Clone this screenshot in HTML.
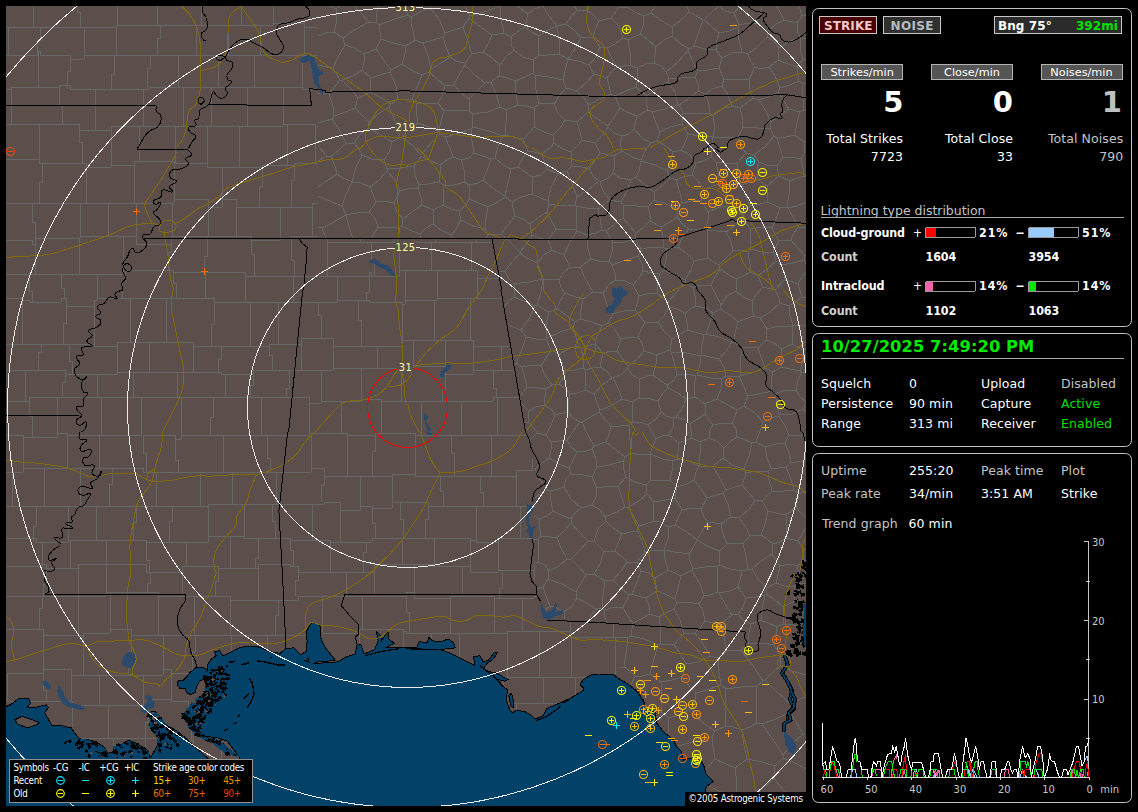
<!DOCTYPE html>
<html lang="en"><head><meta charset="utf-8"><title>Lightning Detector</title>
<style>
html,body{margin:0;padding:0;background:#000;}
body{width:1138px;height:812px;overflow:hidden;position:relative;font-family:"DejaVu Sans Condensed","DejaVu Sans","Liberation Sans",sans-serif;color:#fff;}
.map{position:absolute;left:6px;top:6px;}
.rl text{letter-spacing:.4px;font:11px "DejaVu Sans Condensed","DejaVu Sans","Liberation Sans",sans-serif;fill:#ffff9c;}

.pn{position:absolute;left:0;top:0;}
.pn text{font-family:"DejaVu Sans","Liberation Sans",sans-serif;font-size:12.5px;letter-spacing:.08px;fill:#fff;white-space:pre;}
.pn .b{font-family:"DejaVu Sans Condensed","DejaVu Sans","Liberation Sans",sans-serif;font-weight:bold;font-size:12.4px;letter-spacing:-0.1px;}
.pn .bt{font-weight:bold;font-size:12px;}
.pn .big{font-weight:bold;font-size:29px;}
.pn .dt{font-weight:bold;font-size:16.3px;fill:#00ea00;}
.pn .g{fill:#c4c4c4;}
.pn .gr{fill:#00e000;}
.pn .lb{font-size:11.3px;letter-spacing:0;}
.pn .ax{font-family:"DejaVu Sans Condensed","DejaVu Sans","Liberation Sans",sans-serif;font-size:11px;fill:#c8c8c8;}
.pn .lg{font-family:"DejaVu Sans Condensed","DejaVu Sans","Liberation Sans",sans-serif;font-size:9.7px;letter-spacing:-0.25px;fill:#fff;}
.pn .e{text-anchor:end;}
.pn .m{text-anchor:middle;}

</style></head><body>
<svg class="map" width="800" height="800" viewBox="6 6 800 800" shape-rendering="crispEdges">
<rect x="6" y="6" width="800" height="800" fill="#5c4f4b"/>
<path d="M318,227 322,228M322,228 326,239M774,778 762,789 751,799M774,778 782,789 792,799M751,799 756,806M792,799 789,806M806,794 799,796 792,799M318,161 327,156M318,187 328,180 337,174M337,174 335,166 331,156M327,156 331,156M318,146 327,156M346,143 338,151 331,156M346,143 340,131 332,119M332,119 318,123M318,196 332,202 342,206M337,174 343,178 352,182M342,206 346,194 352,182M346,143 354,143M362,155 359,149 354,143M362,155 356,167 352,182M524,423 528,422M528,442 537,433M528,422 534,428 537,433M551,442 546,435M551,442 551,450 549,458M546,435 537,433M549,458 542,463 535,469M533,539 538,539M534,563 538,562M538,562 539,550 538,539M532,194 532,187 532,177M532,194 539,197 548,201M548,201 551,187 558,174M532,177 541,175 547,169M558,174 547,169M802,16 799,6M802,16 797,23M797,23 784,20M784,20 780,12 776,6M767,32 776,24 784,20M767,32 757,23M757,23 760,15 762,6M739,25 734,13M739,25 749,23 757,23M734,13 740,6M644,16 635,12 627,7M644,16 651,13M655,6 651,13M627,7 619,7M806,628 806,631M806,675 792,671 780,666M780,666 781,657M806,642 792,648 781,657M751,624 761,620M751,624 749,633 748,643M748,643 763,643 774,645M774,645 776,636 777,627M761,620 768,623 777,627M806,628 794,625 783,624M774,645 781,657M783,624 777,627M726,689 725,709 726,726M726,689 721,685M726,726 715,731M715,731 702,722 691,709M691,709 695,702 696,693M721,685 707,690 696,693M780,666 773,672 765,680M748,643 741,650M741,650 753,666 763,681M765,680 763,681M806,697 800,699 792,705M765,680 777,692 792,705M726,689 741,687 757,686M726,726 733,727 742,730M757,686 756,705 757,723M742,730 750,727 757,723M735,768 737,783 736,797M735,768 742,763 747,759M736,797 742,796 751,799M774,778 775,766M747,759 762,762 775,766M757,686 763,681M792,705 790,712M790,712 776,719 762,724M762,724 757,723M741,650 727,651M721,685 719,673 718,658M727,651 718,658M696,693 690,687 682,677M682,677 686,664M686,664 699,662 710,656M718,658 710,656M735,768 726,764 715,759M715,731 712,737M742,730 744,745 747,759M715,759 713,747 712,737M803,734 806,734M803,734 793,743 783,755M783,758 783,755M783,758 795,763 806,769M790,712 796,722 803,734M762,724 774,741 783,755M775,766 783,758M400,137 392,142M400,137 395,121 389,107M392,142 381,135 368,128M389,107 378,114 369,122M369,122 368,128M384,160 389,152 392,142M384,160 372,159 362,155M354,143 360,135 368,128M322,228 332,223 346,215M353,239 349,227 346,215M342,206 346,215M648,425 640,422 633,422M648,425 656,419 661,412M633,422 632,411 632,402M632,402 639,398M639,398 647,398 658,401M661,412 658,401M551,442 559,441 567,440M549,458 558,464 569,468M569,468 573,460 577,452M567,440 571,447 577,452M624,667 630,671 635,676M624,667 620,667M635,676 631,685M461,220 459,211M461,220 473,226 485,229M488,207 486,218 485,229M488,207 479,203 469,199M469,199 466,205 459,211M664,248 663,237 661,227M664,248 653,247 641,249M641,249 635,239M661,227 650,221M650,221 643,228 636,233M635,239 636,233M547,212 552,222 556,229M547,212 539,217 530,224M532,235 530,224M532,235 539,238 548,240M548,240 556,229M532,194 521,197 512,202M548,201 549,204M549,204 547,212M515,216 513,208 512,202M515,216 523,219 530,224M738,27 729,31 719,33M738,27 739,40 742,52M742,52 732,53 722,58M719,33 717,40 716,50M716,50 722,58M666,72 669,78M666,72 678,62 688,50M669,78 682,78 695,77M688,50 692,60 698,71M695,77 698,71M566,88 563,80M566,88 559,96 554,104M539,104 547,103 554,104M539,104 536,90 535,75M535,75 549,77 563,80M577,91 587,82 594,74M577,91 566,88M594,74 589,65M589,65 578,61 568,59M563,80 565,71 568,59M636,87 647,96M636,87 638,78 637,68M666,72 661,66 654,63M669,78 668,82M668,82 657,88 647,96M637,68 646,64 654,63M644,16 643,26 640,34M651,13 662,21 672,27M640,34 647,39 656,47M656,47 664,40 672,36M672,36 672,27M688,50 689,49M654,63 655,55 656,47M672,36 681,44 689,49M716,50 705,49 694,46M719,68 722,58M719,68 708,70 698,71M689,49 694,46M687,6 689,12M689,12 695,15 703,20M719,6 712,12 704,20M672,27 680,21 689,12M694,46 698,34 703,20M734,13 725,11 719,6M738,27 739,25M719,33 711,26 704,20M599,21 592,14 587,10M599,21 595,30 593,37M593,37 581,38M581,38 575,31 566,24M566,24 571,17 577,10M587,10 577,10M588,6 587,10M619,7 611,18M611,18 599,21M589,65 596,57 600,47M600,47 593,37M568,59 575,49 581,38M574,6 577,10M804,260 793,263 781,265M804,260 806,264M806,272 800,280 798,284M781,265 784,271 784,280M798,284 790,281 784,280M806,298 802,297M798,284 802,297M793,325 790,316 789,306M793,325 792,326M792,326 779,326 767,329M780,303 789,306M780,303 770,312 760,318M760,318 767,329M806,325 793,325M802,297 795,303 789,306M775,290 784,280M775,290 779,298 780,303M804,260 805,256M805,256 806,255M802,16 806,15M751,624 743,620 738,614M765,595 762,609 761,620M765,595 756,597 746,598M738,614 743,607 746,598M709,786 721,792 733,798M733,798 729,806M678,746 696,741 712,737M715,759 706,769M736,797 733,798M656,712 662,712M669,735 668,727 669,718M662,712 669,718M635,676 642,676 650,674M661,682 650,674M661,682 661,697 662,712M691,709 680,714 669,718M682,677 672,680 661,682M451,235 441,230 433,224M451,235 451,239M421,239 420,234M433,224 426,228 420,234M387,169 400,168 414,166M387,169 384,160M400,137 402,137M402,137 413,146 421,155M414,166 421,156M391,104 380,97 370,92M391,104 398,99M398,99 396,86 390,72M390,72 380,75 371,78M371,78 370,86 370,92M485,83 477,91 469,99M485,83 475,75 465,65M465,65 459,75 454,85M454,85 461,93 469,99M471,129 460,133 445,137M471,129 472,141 474,153M445,137 450,148 453,157M474,153 469,158 461,160M453,157 461,160M421,155 431,143 440,134M440,134 445,137M440,165 429,160 421,156M440,165 447,160 453,157M376,49 381,39M376,49 383,59 391,70M381,39 393,43 406,46M406,46 405,54 402,64M391,70 402,64M364,54 376,49M364,54 364,63 362,70M362,70 371,78M390,72 391,70M411,17 408,15M411,17 412,27 415,40M415,40 406,46M408,15 395,19 379,25M379,25 381,39M422,75 413,71 402,64M422,75 429,72M429,72 431,69M431,69 428,56 423,43M423,43 415,40M412,99 418,85 422,75M412,99 398,99M333,68 338,57 345,45M333,68 327,67 318,65M318,36 326,33 334,32M345,45 343,38M334,32 343,38M364,54 354,48 345,45M377,23 379,25M377,23 369,22M343,38 356,29 369,22M334,116 333,106 329,94M334,116 343,113 355,108M355,108 358,98M358,98 351,89 342,80M329,94 334,88 340,80M340,80 342,80M332,119 334,116M318,93 329,94M369,122 361,114 355,108M389,107 391,104M370,92 363,96 358,98M362,70 353,76 342,80M333,68 340,80M371,239 378,227M346,215 357,213 369,212M378,227 375,218 369,212M398,239 400,227M378,227 391,228 400,227M420,234 412,231 402,226M400,227 402,226M526,337 536,339 546,339M526,337 522,349 516,363M541,366 533,365 522,367M541,366 546,358 551,350M546,339 551,350M516,363 522,367M535,306 529,319 521,330M535,306 524,301 514,297M514,297 509,301 504,307M521,330 513,327 507,325M514,363 516,363M526,337 521,330M461,220 456,229 451,235M485,229 488,235M486,239 488,235M515,216 508,225 501,234M512,202 505,197M505,197 496,203 488,207M501,234 488,235M532,235 526,245 520,252M501,234 510,242 520,252M600,410 597,403 594,394M600,410 611,406 622,399M594,394 602,385 612,378M622,399 619,390 613,378M633,422 629,425M632,402 622,399M599,412 600,410M599,412 606,421 611,426M611,426 620,426 629,425M600,367 593,368 586,370M600,367 607,371 612,378M586,370 585,380 586,390M586,390 594,394M648,425 652,432 656,439M674,418 666,416 661,412M674,418 673,427 669,435M669,435 662,436 656,439M647,494 646,485M647,494 654,502M654,502 666,500 675,498M675,498 677,487M677,487 670,480M670,480 659,480 651,480M646,485 651,480M670,480 672,471 672,461M672,461 663,459 650,454M651,480 650,468 650,454M629,425 630,440 631,453M656,439 652,448 650,454M631,453 640,455 650,454M597,467 596,459 592,449M597,467 609,465 623,461M623,461 625,457M625,457 616,450 606,442M606,442 594,446M594,446 592,449M592,477 583,475 571,474M592,477 597,467M569,468 571,474M577,452 586,451 592,449M646,485 635,482 626,477M626,477 624,470 623,461M631,453 625,457M611,426 609,434 606,442M599,412 589,418 582,422M582,422 587,433 594,446M567,440 574,430 580,422M580,422 582,422M592,477 597,488M626,477 618,486M597,488 609,486 618,486M535,469 540,480 548,490M535,498 541,493 548,490M538,539 541,536M541,536 540,529 539,519M534,516 539,519M538,562 545,565 549,571M549,571 559,566 567,559M541,536 551,537 557,538M557,538 561,548 567,559M536,589 543,587M543,612 550,606M550,606 546,596 543,587M549,571 548,579M543,587 548,579M803,409 806,402M803,409 806,413M789,435 785,443M789,435 798,435 806,435M806,461 797,462 791,462M791,462 789,453 785,443M789,435 785,426 779,416M803,409 792,414 779,415M774,136 770,128M774,136 765,147 754,155M738,137 743,127M738,137 741,146 746,153M754,155 746,153M743,127 758,128 770,128M740,108 748,102 753,98M740,108 742,116 743,127M771,122 770,128M771,122 766,111 759,100M759,100 753,98M724,79 736,79 749,80M724,79 722,86M740,108 732,106M722,86 728,95 732,106M753,98 750,90 749,80M806,38 800,38M806,60 803,59M803,59 800,50 800,38M797,23 797,30 800,38M799,81 790,85 780,88M799,81 802,83M802,83 803,96 804,110M778,92 780,88M778,92 784,101 789,109M789,109 800,112M800,112 804,110M806,83 802,83M803,59 797,67M797,67 799,81M806,111 804,110M771,122 780,115 789,109M759,100 768,97 778,92M757,179 757,169 759,162M757,179 767,186M759,162 767,165 777,166M767,186 774,180 779,176M777,166 779,176M780,208 787,207M780,208 776,219 772,228M799,227 793,234 791,240M799,227 794,219 788,208M788,208 787,207M772,228 776,236 779,241M791,240 779,241M767,186 767,194 768,202M768,202 780,208M790,181 779,176M790,181 789,194 787,207M805,256 797,247 791,240M806,228 799,227M806,202 797,206 788,208M806,177 804,176M804,176 795,179 790,181M577,91 584,98 589,105M607,78 594,74M607,78 609,85 611,94M611,94 599,99 589,105M495,158 491,159M495,158 503,165 511,169M491,159 488,168 483,180M511,169 508,183 505,196M505,196 494,189 483,180M465,182 469,185M465,182 464,170 461,160M469,185 478,183 483,180M474,153 483,156 491,159M518,167 525,172 532,177M518,167 511,169M469,199 470,191 469,185M613,242 606,231M613,242 625,242 635,239M636,233 629,225 623,218M606,231 614,225 623,218M534,108 539,104M534,108 527,106 518,105M533,73 535,75M533,73 525,77 515,81M518,105 516,94 515,81M503,136 489,131 473,127M503,136 505,135M505,135 506,122 506,110M473,127 472,114M472,114 488,112 500,107M506,110 500,107M471,129 473,127M495,158 498,146 503,136M485,83 491,82M469,99 469,110M469,110 472,114M491,82 496,94 500,107M518,105 506,110M515,81 508,78 499,76M499,76 491,82M500,6 484,12 470,16M470,16 465,6M504,33 492,35M504,33 501,19 500,6M470,16 469,18M492,35 482,28 469,18M554,143 553,135M554,143 550,148 542,154M553,135 544,132 534,127M542,154 534,152 528,151M534,127 530,132 523,139M528,151 523,139M534,108 535,116 534,127M554,104 558,113 565,120M565,120 560,128 553,135M518,167 522,159 528,151M547,169 544,160 542,154M505,135 513,137 523,139M517,6 528,14M528,14 534,9 543,6M566,24 557,26M543,6 549,16 557,26M623,38 628,40M623,38 615,44 607,48M628,40 630,53 630,65M607,48 612,59 617,67M617,67 630,65M611,18 619,26 623,38M640,34 628,40M600,47 607,48M637,68 630,65M607,78 612,71 617,67M636,87 626,91 615,96M611,94 615,96M806,348 803,350M792,326 792,334 792,344M792,344 803,350M806,607 795,601M783,624 784,617 783,607M795,601 783,607M783,607 774,599 766,594M564,612 557,608 550,606M564,612 572,606 577,598M548,579 562,584 576,592M577,598 576,592M571,559 567,559M571,559 578,566 586,575M576,592 581,583 586,575M443,205 443,196 444,185M443,205 433,210M433,210 422,205M422,205 421,198 418,188M418,188 419,185M419,185 428,184 439,182M444,185 439,182M459,211 451,209 443,205M465,182 454,185 444,185M433,224 433,210M403,219 402,226M403,219 413,211 422,205M440,165 440,173 439,182M414,166 415,175 419,185M439,132 429,127 418,123M439,132 441,121 444,111M438,103 444,111M438,103 428,104 416,103M416,103 416,113 418,123M402,137 410,129 418,123M440,134 439,132M469,110 455,110 444,111M454,85 445,86M445,86 442,96 438,103M412,99 416,103M429,72 436,78 445,86M376,202 385,201 394,203M376,202 373,194 370,187M387,171 395,180 400,191M387,171 379,180 370,187M400,191 394,203M403,219 397,212 394,203M369,212 376,202M352,182 361,183 370,187M387,169 387,171M418,188 410,188 400,191M713,425 705,414M713,425 724,423 732,423M717,399 705,404M717,399 728,405 737,410M737,410 735,417 732,423M705,414 705,404M668,388 678,393 686,399M668,388 667,385M667,385 674,380 677,374M677,374 687,374 696,376M696,376 694,386 695,397M686,399 695,397M674,418 676,417M658,401 663,393 668,388M676,417 682,409 686,399M676,417 685,420 690,424M690,424 696,420 705,414M705,404 695,397M639,398 639,387 640,379M613,378 622,374 628,368M628,368 632,375 640,379M667,385 661,381 653,375M640,379 647,376 653,375M677,374 674,362 671,352M657,355 656,364 653,375M657,355 670,350M671,352 670,350M775,290 763,287M760,318 754,316M754,316 752,309 752,301M763,287 756,295 752,301M566,371 575,370 583,368M566,371 562,363 559,354M583,368 583,357 581,348M559,354 570,348 579,346M581,348 579,346M600,367 601,362 603,353M586,370 583,368M603,353 595,344M595,344 581,348M541,366 545,375 552,385M551,350 559,354M566,371 563,378 559,384M552,385 559,384M586,390 577,393 570,394M559,384 565,388 570,394M580,422 573,418 568,412M570,394 568,405 568,412M546,435 552,423 555,415M555,415 568,412M498,271 505,271M520,252 520,253M520,253 513,261 505,271M514,297 514,284M514,284 509,279 505,271M647,494 639,501 628,507M618,486 621,495 625,507M628,507 625,507M557,538 565,530 571,523M571,559 581,549 588,541M571,523 579,532 588,541M597,488 596,497 592,505M625,507 617,512 605,517M592,505 600,510 605,517M604,551 615,551M604,551 594,541M615,551 618,543 622,534M622,534 613,528 606,521M606,521 598,529 594,541M604,551 600,564 594,574M586,575 594,574M594,541 588,541M713,425 710,430 709,438M732,423 736,429 737,437M709,438 718,442 724,448M737,437 731,441 724,448M699,466 689,461 677,459M699,466 700,455 700,442M677,459 678,452 679,443M679,443 692,438M692,438 700,442M694,480 696,472 699,466M694,480 687,484 677,487M672,461 677,459M707,498 716,495 723,493M707,498 701,489 694,480M713,466 699,466M713,466 720,479 726,490M726,490 723,493M713,466 723,458M709,438 700,442M724,448 723,458M669,435 679,443M690,424 692,438M769,67 761,69 755,67M769,67 778,60M778,60 779,48M748,54 751,62 755,67M748,54 757,47 767,37M767,37 774,41 779,48M749,80 755,67M780,88 775,76 769,67M797,67 788,64 778,60M800,38 790,41 779,48M742,52 748,54M724,79 719,68M767,32 767,37M757,179 749,182 742,185M768,202 760,204 750,206M742,185 745,194 750,206M736,279 736,291M736,279 743,276 750,272M736,291 743,297 752,301M763,287 758,276M750,272 758,276M781,265 776,261M758,276 767,269 776,261M779,241 773,252M776,261 773,252M565,120 577,122M589,105 588,112M577,122 584,116 588,112M738,137 726,138 713,137M732,106 722,109 713,116M713,137 715,128 713,116M554,143 563,149 571,152M577,122 580,132 582,140M571,152 578,145 582,140M558,174 567,171M567,171 572,166M571,152 572,166M661,227 670,222 677,217M650,221 650,215 648,207M677,209 677,217M677,209 664,203 654,200M654,200 648,207M623,218 623,205M648,207 637,206 623,205M711,157 703,161 696,163M711,157 712,146 713,137M696,163 690,155 681,150M713,137 699,136 688,134M681,150 685,143 688,134M668,82 675,92 678,105M678,105 665,109 652,112M647,96 646,102 648,110M652,112 648,110M681,150 673,152M673,152 666,146 657,141M682,124 688,134M682,124 670,127 660,132M660,132 657,141M591,259 580,267M591,259 599,261 609,261M580,267 586,280 593,292M612,265 609,261M612,265 615,273 615,280M615,280 608,286 603,293M603,293 593,292M613,242 612,252 609,261M587,235 588,249 591,259M587,235 596,233 602,230M602,230 606,231M638,256 641,249M638,256 626,260 612,265M570,267 564,255M570,267 563,273 559,280M559,280 550,279 543,280M552,250 564,255M552,250 544,255 537,263M537,263 541,272 542,279M543,280 542,279M577,231 570,242 564,255M577,231 587,235M580,267 570,267M576,229 567,230 556,229M576,229 577,231M548,240 552,250M520,253 527,258 537,263M514,284 529,282 542,279M535,306 537,305M537,305 541,292 543,280M579,346 576,337 573,328M547,338 560,332 573,328M537,305 549,312M547,338 546,324 549,312M598,209 605,204 610,200M598,209 587,208 576,206M577,197 588,190 599,181M577,197 575,205M610,200 603,191 600,182M576,206 575,205M602,230 600,218 598,209M623,205 621,202M621,202 610,200M576,229 577,217 576,206M567,171 572,183 577,197M572,166 582,167 589,169M589,169 593,176 599,181M549,204 561,206 575,205M621,202 627,191 631,180M613,173 620,178 631,180M613,173 608,178 600,182M450,57 456,61 465,63M450,57 446,47 443,37M463,27 468,41 472,54M463,27 454,30 445,33M465,63 472,54M445,33 443,37M465,65 465,63M431,69 441,63 450,57M423,43 433,40 443,37M492,35 488,44 483,52M483,52 472,54M469,18 463,27M430,8 431,6M430,8 439,19 445,33M500,65 492,58 483,52M500,65 499,76M430,8 422,11 411,17M568,59 559,54M559,54 559,39 557,26M804,142 805,152M804,142 795,135M783,158 791,157 801,159M783,158 780,148 777,138M801,159 805,152M777,138 786,137 795,135M806,141 804,142M800,112 797,122 795,135M804,176 803,168 801,159M777,166 783,158M774,136 777,138M759,162 754,155M779,416 771,418 763,422M779,415 777,404 775,394M763,422 755,413 744,406M748,396 744,406M748,396 759,394 772,391M772,391 775,394M806,402 800,397 796,390M775,394 785,390 796,390M806,373 802,372M796,390 798,380 802,372M803,350 803,361 800,371M802,372 800,371M782,349 781,358 781,367M782,349 774,343 766,340M766,340 758,348M758,348 761,357 765,368M765,368 773,372M773,372 781,367M792,344 782,349M800,371 790,369 781,367M767,329 766,340M754,316 745,319 738,322M738,322 735,333 734,342M742,348 734,342M742,348 750,347 758,348M740,376 740,362 742,348M740,376 754,372 765,368M748,396 743,385 739,376M772,391 771,380 773,372M791,462 786,467M786,467 791,479 794,490M806,491 799,494M794,490 799,494M786,538 798,541M786,538 787,526 786,515M786,515 796,507M796,507 800,512 806,518M798,541 802,534 806,527M796,507 799,494M615,551 622,557 627,562M605,581 594,574M605,581 613,580M613,580 621,571 627,562M608,624 605,618 604,610M588,623 591,615 596,609M596,609 602,608M602,608 604,610M624,667 626,654 628,638M628,638 620,637M564,612 565,621M577,598 586,603 596,609M605,581 603,595 602,608M686,664 680,653 674,645M710,656 703,644 695,633M674,645 678,640 684,634M695,633 684,634M654,502 653,512 653,521M628,507 634,517 639,526M653,521 646,524 639,526M622,534 631,532 637,531M606,521 605,517M639,526 637,531M697,540 701,533 708,522M697,540 687,532 675,525M708,522 704,517 701,509M701,509 691,508 682,510M682,510 679,516 675,525M720,551 727,544M720,551 709,547 697,540M727,544 723,534 721,524M721,524 708,522M707,498 701,509M723,493 728,504 731,517M721,524 731,517M675,498 682,510M668,527 661,522 653,521M668,527 675,525M408,15 404,6M377,23 376,13 379,6M329,6 336,9M336,9 340,6M334,32 337,20 336,9M369,22 361,13 354,6M719,359 724,367 726,376M719,359 710,357 701,355M697,375 711,378 722,379M697,375 700,364 700,356M722,379 726,376M739,376 726,376M732,342 727,350 719,359M732,342 734,342M706,334 704,335M706,334 719,337 732,342M704,335 702,345 701,355M717,399 721,389 722,379M671,352 687,353 700,356M737,410 744,406M638,337 629,337 621,339M638,337 642,343 644,351M644,351 637,359 628,366M628,366 622,358 617,351M617,351 621,339M645,323 641,329 638,337M645,323 639,315 635,310M635,310 624,311 613,314M613,314 608,323M608,323 615,330 621,339M657,355 644,351M628,368 628,366M603,353 612,351 617,351M595,344 597,336 602,326M602,326 608,323M638,256 642,264 643,271M615,280 625,281 633,285M643,271 639,278 633,285M635,310 637,304 639,296M613,314 607,305 603,293M633,285 639,296M643,271 652,273 660,273M639,296 647,294 657,293M660,273 657,282 657,293M695,306 695,296 693,288M695,306 706,308 713,313M713,313 720,309M711,285 700,285 693,288M711,285 716,295 721,305M720,309 721,305M706,334 710,322 713,313M738,322 730,315 720,309M736,279 729,275 720,269M736,291 727,296 721,305M720,269 716,275 711,285M672,339 680,334 687,330M672,339 664,331 658,322M687,330 687,323 685,313M658,322 664,316 669,307M669,307 677,309 685,313M670,350 672,339M704,335 695,332 687,330M645,323 658,322M695,306 685,313M668,302 657,293M668,302 669,307M668,302 676,293 685,282M685,282 693,288M544,405 545,397 546,389M544,405 536,407 529,411M546,389 537,388 527,387M527,387 520,396M521,403 529,411M552,385 546,389M555,415 551,409 544,405M528,422 529,411M522,367 525,378 527,387M581,508 575,513 571,519M581,508 571,499 564,487M571,519 561,515 553,511M553,511 551,502 550,491M564,487 558,489 550,491M571,523 571,519M592,505 581,508M571,474 566,479 564,487M539,519 547,516 553,511M548,490 550,491M756,442 752,443M756,442 765,447M752,443 749,456 744,469M765,447 767,458 771,468M768,471 771,468M768,471 757,471 746,473M746,473 744,469M763,422 760,431 756,442M737,437 743,439 752,443M785,443 776,444 765,447M723,458 732,465 744,469M786,467 778,468 771,468M772,491 784,491 794,490M772,491 769,480 768,471M726,490 735,487 742,485M742,485 746,473M726,187 738,182M726,187 718,184M718,184 718,172 716,162M738,182 737,173 737,163M737,163 725,163 716,162M742,185 738,182M750,206 743,215M743,215 735,211 727,206M727,206 726,196 726,187M746,153 737,163M711,157 716,162M676,180 683,177 692,175M676,180 680,193 682,203M692,175 698,181 704,189M682,203 691,201 701,200M701,200 704,189M696,163 692,175M718,184 711,187 704,189M689,229 697,230 706,228M689,229 683,225 677,217M677,209 682,203M708,212 708,220 706,228M708,212 701,200M727,206 717,208 708,212M679,105 688,99 698,91M679,105 683,113M683,113 696,113 709,113M709,113 709,105 706,94M698,91 706,94M695,77 698,84 698,91M682,124 683,113M652,112 656,123 660,132M713,116 709,113M722,86 712,89 706,94M615,96 620,108M588,112 598,119 608,126M620,108 615,116 608,126M648,110 637,116M620,108 627,112 637,116M641,161 639,171 636,177M641,161 655,165 667,171M636,177 644,184 654,192M654,192 663,185 670,178M670,178 667,171M654,200 654,192M631,180 636,177M676,180 670,178M673,152 670,163 667,171M565,293 560,301 557,309M565,293 573,296 583,299M557,309 566,315 575,322M583,299 581,310 580,319M580,319 575,322M559,280 561,288 565,293M549,312 557,309M593,292 583,299M573,328 575,322M602,326 592,322 580,319M539,36 538,46 538,56M539,36 530,31 525,27M514,50 511,45 511,37M514,50 523,57 533,60M533,60 538,56M511,37 517,32 525,27M559,54 547,55 538,56M557,26 548,30 539,36M528,14 525,27M500,65 506,57 514,50M504,33 511,37M533,73 533,60M772,491 766,497 762,501M786,515 776,513 768,511M768,511 762,501M742,485 748,492 755,500M731,517 739,518M739,518 749,509 755,500M755,500 762,501M795,587 784,586 776,583M795,587 798,583M798,583 797,574 798,566M798,566 790,564 780,566M776,583 778,575 780,566M795,601 794,593 795,587M766,594 767,588M767,588 776,583M806,584 798,583M806,561 803,559M806,549 804,549M803,559 804,549M798,566 803,559M798,541 804,549M613,580 621,588 629,595M604,610 615,607 623,607M623,607 629,595M704,596 710,595 718,592M704,596 699,604M699,604 703,611 705,621M719,593 725,604 732,615M705,621 713,623 721,624M721,624 732,615M738,614 732,615M746,598 742,593 738,587M738,587 730,591 719,593M738,587 740,580 742,571M719,565 730,569 742,571M719,565 718,566M718,566 717,578 718,592M727,651 724,637 721,624M695,633 700,628 705,621M668,527 668,539 664,550M697,540 693,548 689,554M664,550 675,552 689,554M719,565 720,551M718,566 705,567 693,569M689,554 690,561 693,569M704,596 700,584 692,570M693,569 692,570M627,562 637,562M637,531 642,541 645,552M637,562 645,552M645,552 655,550 664,550M681,576 692,570M681,576 675,573 668,570M668,570 665,559 664,550M664,270 675,275 685,280M664,270 666,259 666,249M666,249 678,247M678,247 686,253 694,261M694,261 691,270 685,280M660,273 664,270M685,282 685,280M664,248 666,249M689,229 682,238 678,247M707,258 694,261M707,258 707,243 708,230M708,230 706,228M707,258 719,265M719,265 720,269M751,229 750,239 751,249M751,229 743,220M743,220 733,227 726,232M726,232 731,241 733,251M733,251 742,250 748,252M748,252 751,249M772,228 762,227 751,229M773,252 762,252 751,249M743,215 743,220M708,230 716,231 726,232M719,265 726,258 733,251M750,272 750,264 748,252M582,140 595,143M608,127 603,135 595,143M589,169 594,162 600,153M600,153 595,143M613,173 615,165 614,156M600,153 614,156M743,543 750,536M743,543 746,557 748,569M750,536 761,535M761,535 767,539 773,544M772,554 773,544M772,554 761,561 752,569M752,569 748,569M727,544 736,543 743,543M739,518 746,527 750,536M742,571 748,569M768,511 765,524 761,535M786,538 780,542 773,544M780,566 776,560 772,554M767,588 758,579 752,569M650,674 654,659 658,645M674,645 660,644M658,645 660,644M628,638 631,636M658,645 644,639 631,636M623,607 627,615 633,623M631,636 633,623M684,634 680,620 674,609M699,604 687,602 677,603M674,609 677,603M660,644 661,631 659,617M674,609 665,613 659,617M633,623 643,618 650,614M659,617 650,614M681,576 678,588 675,599M675,599 677,603M655,578 649,573 641,571M655,578 657,591M641,571 637,582 632,594M657,591 646,598M632,594 638,596 646,598M637,562 641,571M668,570 663,573 655,578M675,599 665,594 657,591M629,595 632,594M650,614 649,606 646,598M622,151 620,143 622,136M622,151 632,157 641,160M651,143 642,138 634,129M651,143 645,151 641,160M634,129 629,134 622,136M608,127 614,133 622,136M614,156 622,151M657,141 651,143M637,116 634,129M33,6 33,27M77,6 77,12 80,12 80,27M117,6 117,25M157,6 157,25M201,6 201,25M241,6 241,25M273,6 273,23M6,27 8,27M8,27 33,27M33,27 40,27M40,27 77,27M77,27 84,27M84,27 116,27M116,27 116,25M117,25 157,25M157,25 160,25M160,25 196,25M196,25 201,25M201,25 228,25M228,25 241,25M241,25 260,25M260,25 273,25M273,25 273,23M273,23 304,23M304,23 304,27M304,27 318,27M8,27 8,55M40,27 40,40 37,40 37,55M84,27 84,55M116,25 116,55M160,25 160,38 157,38 157,55M196,25 196,55M228,25 228,55M260,25 260,55M304,27 304,55M6,55 8,55M8,55 38,55M38,55 38,51M38,51 40,51M40,51 40,55M40,55 70,55M70,55 70,59M70,59 84,59M84,59 84,55M84,55 114,55M114,55 116,55M116,55 150,55M150,55 160,55M160,55 178,55M178,55 196,55M196,55 218,55M218,55 228,55M228,55 254,55M254,55 260,55M260,55 302,55M302,55 304,55M304,55 318,55M38,51 38,87M70,59 70,71 67,71 67,89M114,55 114,74 111,74 111,89M150,55 150,68 147,68 147,87M178,55 178,87M218,55 218,87M254,55 254,87M302,55 302,89M6,89 11,89M11,89 11,87M11,87 38,87M38,87 59,87M59,87 59,85M59,85 70,85M70,85 70,89M70,89 95,89M95,89 114,89M114,89 143,89M143,89 150,89M150,89 150,87M150,87 178,87M178,87 183,87M183,87 211,87M211,87 218,87M218,87 247,87M247,87 254,87M254,87 283,87M283,87 302,87M302,87 302,89M302,89 318,89M11,87 11,124M59,85 59,105 62,105 62,124M95,89 95,130M143,89 143,126M183,87 183,126M211,87 211,126M247,87 247,126M283,87 283,124M6,124 11,124M11,124 39,124M39,124 59,124M59,124 79,124M79,124 79,130M79,130 95,130M95,130 111,130M111,130 111,126M111,126 139,126M139,126 143,126M143,126 175,126M175,126 183,126M183,126 207,126M207,126 211,126M211,126 239,126M239,126 247,126M247,126 283,126M283,126 283,124M283,124 287,124M287,124 315,124M315,124 315,126M315,126 318,126M39,124 39,163M79,130 79,142 82,142 82,163M111,126 111,165M139,126 139,161M175,126 175,163M207,126 207,167M239,126 239,167M287,124 287,165M315,126 315,163M6,159 39,159M39,159 39,163M39,163 42,163M42,163 79,163M79,163 86,163M86,163 86,167M86,167 111,167M111,167 111,165M111,165 134,165M134,165 134,161M134,161 139,161M139,161 174,161M175,161 175,163M175,163 207,163M207,163 207,167M207,167 222,167M222,167 239,167M239,167 262,167M262,167 262,165M262,165 287,165M287,165 294,165M294,165 294,163M294,163 315,163M315,163 318,163M42,163 42,182 39,182 39,203M86,167 86,203M134,161 134,203M174,161 174,199M222,167 222,199M262,165 262,186 259,186 259,207M294,163 294,180 291,180 291,207M6,203 32,203M32,203 42,203M42,203 80,203M80,203 86,203M86,203 108,203M108,203 134,203M134,203 136,203M136,203 172,203M172,203 174,203M174,203 174,199M174,199 208,199M208,199 208,207M208,207 222,207M222,207 222,199M222,199 236,199M236,199 236,207M236,207 262,207M262,207 280,207M280,207 294,207M294,207 312,207M312,207 312,203M312,203 318,203M32,203 32,222 35,222 35,244M80,203 80,236M108,203 108,236M136,203 136,244M172,203 172,236M208,207 208,236M236,207 236,236M280,207 280,238M312,203 312,236M360,239 360,242M393,239 393,242M435,239 435,242M476,239 476,242M6,240 32,240M32,240 32,244M32,244 35,244M35,244 35,238M35,238 79,238M80,238 80,236M80,236 108,236M108,236 123,236M123,236 136,236M136,236 136,244M136,244 171,244M171,244 171,236M172,236 207,236M208,236 236,236M236,236 251,236M251,236 251,240M251,240 280,240M280,240 280,238M280,238 291,238M291,238 291,236M291,236 312,236M312,236 318,236M327,239 327,242M327,242 360,242M360,242 371,242M371,242 396,242M396,242 399,242M399,242 431,242M432,242 471,242M471,242 476,242M476,242 493,242M35,238 35,274M79,238 79,274M123,236 123,270M171,236 171,252 168,252 168,270M207,236 207,256 204,256 204,272M251,240 251,254 254,254 254,276M291,236 291,260 294,260 294,276M327,242 327,276M371,242 371,262 374,262 374,276M399,242 399,270M431,242 431,270M471,242 471,270M6,274 29,274M29,274 35,274M35,274 61,274M61,274 79,274M79,274 97,274M97,274 123,274M123,274 123,270M123,270 125,270M125,270 171,270M171,270 173,270M173,270 173,272M173,272 205,272M205,272 207,272M207,272 245,272M245,272 245,276M245,276 251,276M251,276 291,276M291,276 293,276M293,276 327,276M327,276 337,276M337,276 369,276M369,276 369,272M369,272 371,272M371,272 371,276M371,276 399,276M399,276 399,270M399,270 405,270M405,270 431,270M431,270 437,270M437,270 471,270M471,270 477,270M477,270 477,278M477,278 499,278M29,274 29,291 32,291 32,302M61,274 61,288 64,288 64,298M97,274 97,298M125,270 125,280 122,280 122,298M173,272 173,283 176,283 176,298M205,272 205,298M245,276 245,302M293,276 293,302M337,276 337,300M369,272 369,292 366,292 366,302M405,270 405,300M437,270 437,298M477,278 477,298M6,298 22,298M22,298 22,300M22,300 29,300M29,300 29,302M29,302 61,302M61,302 61,298M61,298 66,298M66,298 66,306M66,306 94,306M94,306 94,300M94,300 97,300M97,300 97,298M97,298 125,298M125,298 130,298M130,298 166,298M166,298 173,298M173,298 205,298M205,298 214,298M214,298 214,302M214,302 245,302M245,302 250,302M250,302 278,302M278,302 293,302M293,302 318,302M318,302 337,302M337,302 337,300M337,300 358,300M358,300 369,300M369,300 369,302M369,302 402,302M402,302 402,304M402,304 405,304M405,304 405,300M405,300 434,300M434,300 437,300M437,300 437,298M437,298 470,298M470,298 477,298M477,298 502,298M22,300 22,344M66,306 66,323 63,323 63,344M94,300 94,346M130,298 130,342M166,298 166,342M214,302 214,324 211,324 211,346M250,302 250,346M278,302 278,344M318,302 318,315 321,315 321,338M358,300 358,320 361,320 361,346M402,304 402,340M434,300 434,340M470,298 470,340M6,344 22,344M22,344 41,344M41,344 66,344M66,344 69,344M69,344 94,344M94,344 94,346M94,346 117,346M117,346 117,342M117,342 130,342M130,342 149,342M149,342 166,342M166,342 193,342M193,342 193,346M193,346 214,346M214,346 221,346M221,346 250,346M250,346 269,346M269,346 269,344M269,344 278,344M278,344 301,344M301,344 301,338M301,338 318,338M318,338 333,338M333,338 333,346M333,346 358,346M358,346 377,346M377,346 402,346M402,346 402,340M402,340 413,340M413,340 434,340M434,340 445,340M445,340 470,340M470,340 473,340M473,340 473,346M473,346 501,346M501,346 510,346M41,344 41,352 38,352 38,370M69,344 69,361 72,361 72,374M117,342 117,372M149,342 149,372M193,346 193,372M221,346 221,359 218,359 218,374M269,344 269,355 272,355 272,370M301,338 301,370M333,346 333,368M377,346 377,368M413,340 413,366M445,340 445,374M473,346 473,370M501,346 501,370M6,370 25,370M25,370 41,370M41,370 65,370M65,370 65,374M65,374 69,374M69,374 97,374M97,374 117,374M117,374 117,372M117,372 133,372M133,372 149,372M149,372 177,372M177,372 193,372M193,372 221,372M221,372 221,374M221,374 225,374M225,374 253,374M253,374 253,370M253,370 269,370M269,370 289,370M289,370 301,370M301,370 321,370M321,370 333,370M333,370 333,368M333,368 361,368M361,368 377,368M377,368 401,368M401,368 401,366M401,366 413,366M413,366 445,366M445,366 445,374M445,374 473,374M473,374 473,370M473,370 493,370M493,370 501,370M501,370 515,370M25,370 25,401M65,374 65,382 62,382 62,397M97,374 97,397M133,372 133,397M177,372 177,397M225,374 225,397M253,370 253,385 250,385 250,397M289,370 289,388 286,388 286,397M321,370 321,401M361,368 361,399M401,366 401,401M445,374 445,389 442,389 442,401M493,370 493,388 496,388 496,397M6,401 25,401M25,401 29,401M29,401 29,397M29,397 57,397M57,397 65,397M65,397 97,397M97,397 101,397M101,397 133,397M133,397 141,397M141,397 177,397M177,397 181,397M181,397 213,397M213,397 225,397M225,397 253,397M253,397 261,397M261,397 289,397M289,397 309,397M309,397 309,403M309,403 321,403M321,403 321,401M321,401 341,401M341,401 361,401M361,401 361,399M361,399 381,399M381,399 381,401M381,401 401,401M401,401 421,401M421,401 445,401M445,401 461,401M461,401 493,401M493,401 493,397M493,397 497,397M497,397 520,397M29,397 29,416 32,416 32,437M57,397 57,433M101,397 101,435M141,397 141,435M181,397 181,435M213,397 213,417 210,417 210,435M261,397 261,435M309,403 309,433M341,401 341,433M381,401 381,433M421,401 421,435M461,401 461,435M497,397 497,435M525,427 525,435M6,435 23,435M23,435 23,437M23,437 29,437M29,437 57,437M57,437 57,433M57,433 67,433M67,433 67,435M67,435 99,435M99,435 101,435M101,435 141,435M143,435 175,435M175,435 175,439M175,439 181,439M181,439 181,435M181,435 213,435M213,435 223,435M223,435 261,435M261,435 267,435M267,435 309,435M309,435 309,433M311,433 341,433M341,433 347,433M347,433 347,435M347,435 375,435M375,435 375,433M375,433 381,433M381,433 415,433M415,433 415,435M415,435 421,435M421,435 451,435M451,435 461,435M461,435 491,435M491,435 497,435M497,435 525,435M525,435 527,435M23,437 23,468M67,435 67,468M99,435 99,468M143,435 143,453 146,453 146,472M175,439 175,460 178,460 178,472M223,435 223,472M267,435 267,458 270,458 270,472M311,433 311,468M347,435 347,476M375,433 375,451 372,451 372,476M415,435 415,476M451,435 451,453 454,453 454,476M491,435 491,476M532,459 532,470M6,472 12,472M12,472 23,472M23,472 23,468M23,468 44,468M44,468 67,468M67,468 80,468M80,468 99,468M99,468 112,468M112,468 143,468M143,468 143,472M143,472 156,472M156,472 175,472M175,472 200,472M200,472 223,472M223,472 232,472M232,472 267,472M267,472 276,472M276,472 311,472M311,472 311,468M311,468 324,468M324,468 324,476M324,476 347,476M347,476 360,476M360,476 375,476M375,476 392,476M392,476 392,474M392,474 415,474M415,474 415,476M415,476 440,476M440,476 451,476M451,476 480,476M480,476 491,476M491,476 516,476M516,476 516,470M516,470 534,470M12,472 12,506M44,468 44,506M80,468 80,506M112,468 112,484 109,484 109,506M156,472 156,506M200,472 200,506M232,472 232,504M276,472 276,504M324,476 324,485 321,485 321,502M360,476 360,506M392,474 392,502M440,476 440,491 443,491 443,506M480,476 480,492 483,492 483,506M516,470 516,506M6,506 12,506M12,506 36,506M36,506 44,506M44,506 68,506M68,506 80,506M80,506 96,506M96,506 112,506M112,506 136,506M136,506 156,506M156,506 172,506M172,506 200,506M200,506 208,506M208,506 208,504M208,504 232,504M232,504 244,504M244,504 272,504M272,504 276,504M276,504 312,504M312,504 324,504M324,504 324,502M324,502 340,502M340,502 340,510M340,510 360,510M360,510 360,506M360,506 372,506M372,506 372,508M372,508 392,508M392,508 392,502M392,502 400,502M400,502 428,502M428,502 428,506M428,506 440,506M440,506 476,506M476,506 480,506M480,506 516,506M516,506 520,506M520,506 535,506M36,506 36,526 33,526 33,542M68,506 68,540M96,506 96,540M136,506 136,522 133,522 133,540M172,506 172,521 169,521 169,542M208,504 208,536M244,504 244,538M272,504 272,521 275,521 275,538M312,504 312,540M340,510 340,542M372,508 372,523 375,523 375,538M400,502 400,519 403,519 403,538M428,506 428,519 425,519 425,538M476,506 476,542M520,506 520,538M6,538 36,538M36,538 36,542M36,542 42,542M42,542 68,542M68,542 68,540M68,540 70,540M70,540 96,540M96,540 106,540M106,540 136,540M136,540 146,540M146,540 146,542M146,542 172,542M172,542 186,542M186,542 208,542M208,542 208,536M208,536 230,536M230,536 244,536M244,536 244,538M244,538 258,538M258,538 272,538M272,538 290,538M290,538 290,540M290,540 312,540M312,540 330,540M330,540 330,542M330,542 340,542M340,542 366,542M366,542 372,542M372,542 372,538M372,538 400,538M400,538 402,538M402,538 428,538M428,538 434,538M434,538 470,538M470,538 470,540M470,540 476,540M476,540 476,542M476,542 498,542M498,542 498,538M498,538 520,538M520,538 533,538M42,542 42,564M70,540 70,568M106,540 106,564M146,542 146,560 149,560 149,572M186,542 186,566M230,536 230,568M258,538 258,558 255,558 255,568M290,540 290,550 293,550 293,566M330,542 330,572M366,542 366,552 363,552 363,572M402,538 402,564M434,538 434,566M470,540 470,572M498,538 498,570M534,565 534,570M6,566 42,566M42,566 42,564M42,564 46,564M46,564 46,568M46,568 70,568M70,568 78,568M78,568 78,564M78,564 106,564M106,564 146,564M146,564 146,572M146,572 150,572M150,572 182,572M182,572 182,566M182,566 186,566M186,566 218,566M218,566 218,568M218,568 230,568M230,568 258,568M258,568 258,564M258,564 290,564M290,564 290,566M290,566 298,566M298,566 298,572M298,572 330,572M330,572 346,572M346,572 366,572M366,572 374,572M374,572 374,564M374,564 402,564M402,564 414,564M414,564 434,564M434,564 434,566M434,566 462,566M462,566 470,566M470,566 470,572M470,572 498,572M498,572 498,570M498,570 502,570M502,570 534,570M46,568 46,584 43,584 43,596M78,564 78,596M106,564 106,592M150,572 150,583 147,583 147,592M182,566 182,596M218,568 218,581 215,581 215,596M258,564 258,600M298,572 298,580 295,580 295,596M346,572 346,596M374,564 374,596M414,564 414,598M462,566 462,596M502,570 502,588 499,588 499,598M534,570 534,579 535,579M6,596 42,596M42,596 46,596M46,596 78,596M78,596 106,596M106,596 106,592M106,592 110,592M110,592 150,592M150,592 158,592M158,592 158,596M158,596 182,596M182,596 194,596M194,596 218,596M218,596 230,596M230,596 230,600M230,600 258,600M258,600 278,600M278,600 298,600M298,600 298,596M298,596 322,596M322,596 346,596M346,596 362,596M362,596 374,596M374,596 406,596M406,596 406,592M406,592 414,592M414,592 414,598M414,598 450,598M450,598 450,596M450,596 462,596M462,596 494,596M494,596 494,598M494,598 502,598M502,598 522,598M522,598 534,598M534,598 534,596M534,596 537,596M42,596 42,608 39,608 39,629M78,596 78,635M110,592 110,629M158,596 158,635M194,596 194,635M230,600 230,635M278,600 278,615 275,615 275,635M322,596 322,632M362,596 362,629M406,592 406,612 409,612 409,633M450,596 450,633M494,598 494,633M522,598 522,631M570,622 570,637M613,624 613,637M6,629 42,629M42,629 43,629M43,629 43,635M43,635 78,635M78,635 83,635M83,635 83,633M83,633 110,633M110,633 110,629M110,629 131,629M131,629 131,635M131,635 158,635M158,635 163,635M163,635 194,635M194,635 195,635M195,635 230,635M230,635 231,635M231,635 267,635M267,635 278,635M278,635 306,635M322,633 359,633M359,633 359,629M359,629 362,629M362,629 403,629M403,629 403,631M403,631 406,631M406,631 406,633M406,633 431,633M431,633 450,633M450,633 459,633M459,633 494,633M494,633 507,633M507,633 507,631M507,631 522,631M522,631 539,631M539,631 570,631M570,631 570,637M570,637 571,637M571,637 610,637M610,637 615,637M615,637 620,637M43,635 43,669M83,633 83,675M131,635 131,654 128,654 128,675M163,635 163,669M195,635 195,651 192,651 192,673M231,635 231,651M267,635 267,649M359,629 359,643M403,631 403,647M431,633 431,638M459,633 459,657M507,631 507,677M539,631 539,677M571,637 571,677M615,637 615,675M7,673 43,673M43,673 43,669M43,669 71,669M71,669 71,675M71,675 83,675M83,675 99,675M99,675 131,675M131,675 143,675M143,675 163,675M163,675 163,669M163,669 171,669M171,669 171,673M171,673 195,673M195,673 205,673M505,677 507,677M507,677 539,677M539,677 543,677M543,677 571,677M571,677 575,677M575,677 586,677M7,673 7,701M43,673 43,690 46,690 46,701M71,675 71,701M99,675 99,705M143,675 143,705M171,673 171,701M503,682 503,685M543,677 543,703M575,677 575,695M7,701 14,701M31,701 43,701M43,701 71,701M72,701 72,705M72,705 99,705M99,705 108,705M108,705 143,705M143,705 148,705M148,705 148,699M148,699 171,699M171,699 171,701M171,701 188,701M188,701 188,705M188,705 192,705M508,703 516,703M516,703 543,703M543,703 557,703M72,705 72,727M108,705 108,738M148,699 148,722 145,722 145,738M188,705 188,710M191,727 191,740M516,703 516,710M80,738 108,738M108,738 113,738M113,738 145,738M145,738 148,738M148,738 156,738M189,740 193,740M193,740 193,734M193,734 196,734M113,738 113,751M145,738 145,747M193,734 193,744M221,740 221,762" fill="none" stroke="#666868" stroke-width="1"/>
<polygon points="6,806 6,706.7 11.3,704.1 18.3,698.8 28.8,698.8 30.6,703.2 27.1,707.6 34.1,707.6 46.4,704.9 48.2,707.6 44.7,712.8 51.7,725.1 58.7,725.1 71,727.8 70.5,726.8 74.1,732.2 79.7,739.2 88.1,739.9 96.6,742 105,747.7 107.8,753.3 113.4,751.9 116.3,747.7 121.9,744.1 127.5,740.6 133.1,741.3 138.8,744.9 144.4,747.7 148.6,751.9 150,758.2 157,746.3 158.5,742 157,736.4 151.4,729.4 149.3,723.8 152.8,719.5 154.2,713.9 151.4,711.1 155.6,711.1 158.5,716.7 166.9,725.2 176.7,730.8 183.8,736.4 192.2,744.9 200.6,751.9 207.7,758.2 209.5,759.4 223.6,763.8 239.4,760.3 239.4,757.7 232.4,748 227.1,741 216.5,737.5 206,736.6 230,750.7 223.1,743.8 216.2,740.3 207.6,738.6 199,736.9 195.5,730 188.6,723.1 181.7,716.2 188.6,711 193.8,704.1 199,699 209.3,695.5 205.9,683.4 204.1,676.6 207.6,669.7 207.6,664.5 211,659.3 216.2,655.9 214.5,651.6 219.7,650.7 223.1,655.9 233.4,650.7 240.3,647.2 250.7,646.4 261,647.2 269.7,651.6 280,653.3 285.2,649 293.9,647.8 300.9,654.8 306.2,651.3 307.1,640.8 306.2,632 309.7,625 313.2,622.3 320.2,625.8 321.1,639 325.5,647.8 332.5,656.6 335.2,660.1 329,661 318.5,661.9 313.2,663.6 320.2,663.1 337.8,661.9 346.6,656.6 355.4,654 357.1,644.3 360.7,644.3 364.2,654 374.7,649.6 378.2,640.8 376.5,632 380,634.6 381.7,640.8 387,632 388.8,632 388.8,639 394,643.4 385.3,647.8 406,647.8 416.5,647.8 419.2,641.7 427.1,642.5 428.8,637.3 432.4,640.8 441.1,641.7 448.2,639 453.5,642.5 455.2,647.8 448.2,648.7 439.4,649.6 449.9,653.1 464,660.1 474.5,665.4 473.7,656.6 479.8,655.7 483.3,661.9 488.6,660.1 493.9,653.1 497.4,652.2 493.9,658.4 486.8,663.6 483.3,668.9 488.6,671.5 497.4,673.3 504.4,677.7 507.9,679.4 504.4,681.2 497.4,679.4 500.9,684.7 507.9,690 507.1,693.5 506.2,700.5 509.7,709.3 512.3,712.8 516.7,710.2 525.5,712 531.7,715.5 535.2,719 543.1,715.5 546.6,708.5 555.4,704.9 569.4,698.8 580,692.6 583.5,690 583.5,688.2 580,684.7 583.5,679.4 592.3,674.2 599.3,675.1 606,674.2 613,674.2 620.1,679.4 628.8,684.7 637.6,691.8 641.1,697 644.7,704.1 642.9,698.8 644.7,705.8 655.2,712.8 657,723.4 664,732.2 672.8,739.2 676.3,746.2 681.6,751.5 683.3,760.3 688.6,758.5 700.9,760.3 704.4,767.3 706.2,774.4 713.2,781.4 706.2,786.7 705.3,791.6 705,806" fill="#024268"/>
<polyline points="6,706.7 11.3,704.1 18.3,698.8 28.8,698.8 30.6,703.2 27.1,707.6 34.1,707.6 46.4,704.9 48.2,707.6 44.7,712.8 51.7,725.1 58.7,725.1 71,727.8 70.5,726.8 74.1,732.2 79.7,739.2 88.1,739.9 96.6,742 105,747.7 107.8,753.3 113.4,751.9 116.3,747.7 121.9,744.1 127.5,740.6 133.1,741.3 138.8,744.9 144.4,747.7 148.6,751.9 150,758.2 157,746.3 158.5,742 157,736.4 151.4,729.4 149.3,723.8 152.8,719.5 154.2,713.9 151.4,711.1 155.6,711.1 158.5,716.7 166.9,725.2 176.7,730.8 183.8,736.4 192.2,744.9 200.6,751.9 207.7,758.2 209.5,759.4 223.6,763.8 239.4,760.3 239.4,757.7 232.4,748 227.1,741 216.5,737.5 206,736.6 230,750.7 223.1,743.8 216.2,740.3 207.6,738.6 199,736.9 195.5,730 188.6,723.1 181.7,716.2 188.6,711 193.8,704.1 199,699 209.3,695.5 205.9,683.4 204.1,676.6 207.6,669.7 207.6,664.5 211,659.3 216.2,655.9 214.5,651.6 219.7,650.7 223.1,655.9 233.4,650.7 240.3,647.2 250.7,646.4 261,647.2 269.7,651.6 280,653.3 285.2,649 293.9,647.8 300.9,654.8 306.2,651.3 307.1,640.8 306.2,632 309.7,625 313.2,622.3 320.2,625.8 321.1,639 325.5,647.8 332.5,656.6 335.2,660.1 329,661 318.5,661.9 313.2,663.6 320.2,663.1 337.8,661.9 346.6,656.6 355.4,654 357.1,644.3 360.7,644.3 364.2,654 374.7,649.6 378.2,640.8 376.5,632 380,634.6 381.7,640.8 387,632 388.8,632 388.8,639 394,643.4 385.3,647.8 406,647.8 416.5,647.8 419.2,641.7 427.1,642.5 428.8,637.3 432.4,640.8 441.1,641.7 448.2,639 453.5,642.5 455.2,647.8 448.2,648.7 439.4,649.6 449.9,653.1 464,660.1 474.5,665.4 473.7,656.6 479.8,655.7 483.3,661.9 488.6,660.1 493.9,653.1 497.4,652.2 493.9,658.4 486.8,663.6 483.3,668.9 488.6,671.5 497.4,673.3 504.4,677.7 507.9,679.4 504.4,681.2 497.4,679.4 500.9,684.7 507.9,690 507.1,693.5 506.2,700.5 509.7,709.3 512.3,712.8 516.7,710.2 525.5,712 531.7,715.5 535.2,719 543.1,715.5 546.6,708.5 555.4,704.9 569.4,698.8 580,692.6 583.5,690 583.5,688.2 580,684.7 583.5,679.4 592.3,674.2 599.3,675.1 606,674.2 613,674.2 620.1,679.4 628.8,684.7 637.6,691.8 641.1,697 644.7,704.1 642.9,698.8 644.7,705.8 655.2,712.8 657,723.4 664,732.2 672.8,739.2 676.3,746.2 681.6,751.5 683.3,760.3 688.6,758.5 700.9,760.3 704.4,767.3 706.2,774.4 713.2,781.4 706.2,786.7 705.3,791.6" fill="none" stroke="#000" stroke-width="1"/>
<polygon points="177.4,681.7 180,680 183.4,680 186.9,676.6 190.3,672.2 195.5,667.9 202.4,667.1 207.6,669.7 205.9,673.1 203.3,679.1 199,681.7 196.4,686.9 195.5,692.1 191.2,694.7 186.9,692.9 185.2,688.6 180,688.6 177.4,685.2" fill="#024268" stroke="#000" stroke-width="1"/>
<polygon points="508.8,695.3 511.4,693.5 513.6,700.5 513.2,707.6 511.1,706.7 509.7,700.5" fill="#024268" stroke="#000" stroke-width="1"/>
<polygon points="14.8,719.9 21.8,716.4 32.4,719.9 39.4,722.5 35.9,725.1 27.1,727.8 18.3,724.3" fill="#5c4f4b" stroke="#000" stroke-width="1"/>
<polygon points="299.1,59.6 304.4,56.1 308.8,55.2 315,57.8 315.8,64 320.2,71 323.8,71.9 322,74.5 318.5,76.3 318.5,83.3 322.9,90.4 323.4,96.5 321.1,93.9 318.5,88.6 314.1,83.3 313.2,76.3 311.4,67.5 309.7,60.5 305.3,63.1 300.9,62.2" fill="#2b4a6b"/>
<polygon points="368.6,261.4 374.7,258.4 381.7,264 388.8,265.8 396.7,276.3 394,276.3 385.3,270.1 378.2,266.6 373,262.6 369.4,263.1" fill="#2b4a6b"/>
<polygon points="447.3,362.9 451.7,366.4 448.2,370.8 443.8,373.5 444.7,377 439.4,377.5 441.1,371.7 445.5,367.3" fill="#2b4a6b"/>
<polygon points="424.5,413 428,416.5 426.2,421.8 429.7,427.1 431.5,430.6 428,432 425.3,423.6 423.6,416.5" fill="#2b4a6b"/>
<polygon points="427.1,432 432.4,432.9 430.6,435.2 427.1,434.1" fill="#2b4a6b"/>
<polygon points="611.3,290 627.1,290 628,293.5 622.7,297.9 620.1,304.1 615.7,307.6 613,312.8 606,313.7 606,307.6 611.3,304.9 614.8,298.8 612.2,295.3" fill="#2b4a6b"/>
<polygon points="611.3,290 613,286.8 616.5,288.6 619.2,286 622.7,287.7 623.6,290" fill="#2b4a6b"/>
<polygon points="526.4,502.3 529,505.8 533.4,502.3 532.5,511.1 529,516.4 529,523.4 531.7,527.8 536.9,525.1 532.5,531.3 533.4,538.3 529.9,537.4 529,533.1 525.5,531.3 528.1,527.8 525.5,519.9 527.3,512.8" fill="#2b4a6b"/>
<polygon points="540.4,601.2 543.1,607.4 546.6,611.8 551.9,610.9 555.4,603 557.1,603.9 555.4,611.8 563.3,610 563.3,613.5 553.6,617.1 548.4,620 543.1,617.9 541.3,610.9" fill="#2b4a6b"/>
<polygon points="122.9,657.5 125.5,653.1 130.8,651.7 135.2,654 136.4,659.2 134.3,664.5 129.9,668 125.5,667.1 122,664.5" fill="#2b4a6b"/>
<polygon points="42,681.2 45.5,680.3 49.9,684.7 51.7,689.1 47.3,689.1 43.8,685.6" fill="#2b4a6b"/>
<polygon points="58.7,684.7 62.2,690 64.9,697 69.3,702.3 76.3,704.1 84.2,706.7 84.2,710.2 78.1,709.3 67.5,706.7 62.2,703.2 58.7,697 57,691.8" fill="#2b4a6b"/>
<polygon points="144.4,697 148.6,694.9 152.8,697 152.1,699.8 154.9,702.7 153.5,707.6 148.6,709.7 144.4,713.9 140.9,711.1 140.9,707.6 145.8,704.1 147.9,700.5" fill="#2b4a6b"/>
<polygon points="783.5,728.7 788.8,735.7 794,741 796.7,746.2 794,755 788.8,751.5 785.3,744.5" fill="#2b4a6b"/>
<polygon points="65.6,739.2 76.9,737.8 88.1,739.9 106.4,749.1 106.4,758.2 88.1,758.2 74.1,751.9 65.6,744.9" fill="#024268"/>
<polygon points="113.4,746.3 121.9,743.4 133.1,741.3 148.6,751.9 148.6,758.2 113.4,758.2" fill="#024268"/>
<polygon points="150,711.1 158.5,713.9 166.9,725.2 183.8,736.4 183.8,742 172.5,749.1 161.3,758.2 157,758.2 157,736.4 150,728" fill="#024268"/>
<polygon points="182.4,715.3 192.2,701.3 200.6,695.6 206.3,690 220.1,690 220.1,698.4 209.1,706.9 203.5,718.1 202.1,732.2 209.1,739.2 220.1,742 214.7,744.1 200.6,737.8 189.4,729.4" fill="#024268"/>
<polygon points="204.1,673.1 226.6,664.5 229.1,674.8 226.6,688.6 223.1,702.4 211,711 199,726.6 202.4,736.9 188.6,726.6 181.7,716.2 193.8,704.1 205.9,695.5" fill="#024268"/>
<polygon points="207.6,736.9 219.7,740.3 230,749 240.3,757.6 226.6,754.1 212.8,743.8" fill="#024268"/>
<path d="M87,751 87,752 85.5,752 85,750.5 87,749.5ZM78,742.5 77.5,744.5 75,744ZM83,746 80.5,745 81.5,744 83.5,744ZM77,745.5 76,745.5 75.5,744.5 76,743.5 77,744.5 78,745ZM83,741 84.5,741.5 84,742 83.5,742.5 82.5,742.5ZM102.5,755.5 101.5,755 102.5,754.5 103,754.5 104,755.5ZM90,755.5 91,756 89,757.5 87,756 88.5,754.5ZM80,748 80,746.5 80.5,746 81.5,745.5 82,747 82,747.5ZM90,748 88,748 88,746 87,744.5 90.5,745.5 90.5,746.5ZM77.5,747.5 79.5,746 79.5,747 80,748.5 78.5,749 76.5,748ZM87,750 87.5,750.5 86,751.5 85.5,750.5 86,749.5ZM94.5,751.5 97,751 97.5,751.5 96.5,752ZM104,751 106.5,752.5 106.5,753.5 104.5,754.5 104,754 103.5,751ZM79,738.5 80,738 80.5,738.5 80,739 79.5,739.5ZM106,756 105,755 107,754.5ZM82,746.5 81.5,746 81.5,745.5 82.5,745.5 82.5,746 82.5,746.5ZM77.5,740.5 78.5,738.5 81,742 81.5,742.5 77,743 76.5,742ZM82.5,747 80,748 77.5,747ZM86,744 90.5,743 89,744.5ZM105,756.5 104.5,755 105.5,754.5 107.5,756 105.5,756.5ZM100,755.5 99,756.5 98,756.5 98.5,756 99,755.5ZM97.5,745 97,746.5 95.5,744.5 94.5,744 96.5,743 97.5,743.5ZM95.5,743 94.5,744 92,745 91.5,743 93,741.5ZM78,742 78.5,740.5 81,742.5 80,743.5 77.5,743.5ZM102.5,752.5 105.5,754 101,754.5ZM79,744 82.5,742.5 83.5,744.5ZM67.5,741 69,740 69.5,739.5 71,740.5 70.5,742 68.5,742ZM64.5,742 66,741 68,741.5 65,743.5ZM99,752.5 97.5,752.5 98.5,751.5 99,751.5ZM91,755.5 89,757 88.5,756 88,754 90,754.5ZM100.5,752.5 101.5,752 102,752.5 103,753 102,753.5 101,754Z" fill="#000" stroke="#000" stroke-width="0.8"/>
<path d="M89.5,752.5 91,752 92.5,753 92,754 91.5,755Z" fill="#5c4f4b"/>
<path d="M134,747 132,748.5 130,746 132,745.5 133.5,746ZM135,748 132,748.5 133,747.5 134.5,745 135.5,747ZM148,753 143,753.5 142.5,750ZM137.5,752 138,751 140,751.5 140,752ZM115.5,757 116,757 116.5,756.5 117.5,757.5 117,758 116,757.5ZM120.5,747.5 120.5,746.5 122,746.5 121.5,747.5ZM125.5,742.5 126,742 127,743 128.5,744 125.5,744 124,743ZM114,752 112.5,751.5 112.5,750.5 115.5,749 116,749 117.5,752ZM121.5,748 120.5,747.5 121,747 122,747.5ZM134.5,745 137,744.5 139,746.5 136.5,746ZM143,749.5 141,749 139.5,748 140,747.5 141.5,746 143,748ZM131,754 130.5,754 128.5,752.5 128.5,752 130,750 133,752ZM144,754.5 143.5,754.5 143.5,753.5 144.5,754.5ZM115.5,751.5 117,750.5 117.5,754.5 113,753ZM145.5,759.5 143.5,758.5 143,758 145.5,757 146.5,758ZM125.5,751.5 126.5,751.5 126.5,752 126.5,752.5 125,752ZM115.5,750.5 114,751.5 112.5,751 113,750.5 113.5,749 114.5,750.5ZM131,744.5 132,744 131.5,746.5ZM116,744 119,745 117.5,745.5ZM120.5,753 123.5,752.5 124.5,751 124.5,754 124,756 120.5,755ZM137.5,745.5 136.5,745 136.5,744 138,743 139,744ZM132,744 129.5,742.5 132.5,742 133.5,743 134.5,744ZM131.5,756.5 132,757.5 130.5,757.5 130.5,756 132,755.5ZM140,748.5 136,749.5 135,748 138,746.5ZM146,757 147.5,758.5 146,759.5ZM117.5,743.5 120.5,745 118.5,746 115.5,744.5Z" fill="#000" stroke="#000" stroke-width="0.8"/>
<path d="M124.5,756.5 123.5,755 126,756ZM115.5,757 115,756.5 115.5,755.5 116.5,755.5 117,756ZM131,754.5 129,753 132.5,752 133.5,754Z" fill="#5c4f4b"/>
<path d="M159.5,738 163.5,735.5 163.5,738.5ZM180.5,741.5 180,741 181,741ZM173.5,730 173,731 171.5,730 172.5,729ZM172.5,732 172,734 170.5,734.5 168,733 170,731.5 171.5,731.5ZM158,734.5 159.5,736 160,738 157,737.5ZM158,744.5 157.5,743.5 157.5,743 158.5,743.5 159,744ZM156,726 156.5,727.5 155,729 153,728 154,726 155,726ZM158,736.5 156.5,735.5 160.5,734 160,737ZM178.5,734 178,736 175,735 175.5,733.5ZM152.5,728 152,729 150.5,729 150.5,728 151,727.5ZM151.5,718.5 149.5,716.5 146.5,716.5 149,713 152,716ZM162,735 163,736 162,736 160.5,736 161,735.5ZM178,747 176,745.5 179,744.5ZM163.5,739.5 161,740 160.5,738.5 163,737.5 164.5,738ZM153.5,722.5 150.5,721.5 151,719.5 153.5,720.5ZM158,732.5 159,731 160,732 159.5,733 159,735ZM155.5,721 155,719 156.5,718.5 158,718.5ZM168,735 167,735 166,735 166.5,733.5 168,733 168.5,734ZM157.5,727 158.5,729 155.5,729.5ZM176.5,741 175.5,742.5 173.5,740.5 175,740.5ZM153,723.5 153.5,724.5 151.5,724ZM160.5,739 161.5,740 160.5,742 158.5,740ZM158.5,751.5 160.5,749.5 160.5,751 160,753ZM169.5,729.5 172,730 174,731 172,731.5 171,732.5 168,730.5ZM163,724.5 164.5,726.5 160.5,728 162,725.5ZM168,743.5 168,744.5 167,745ZM153.5,729.5 153.5,731 153,731 152,731 150.5,730.5 152,730ZM170.5,745.5 171,744.5 172,745ZM163,735.5 161,733 166,733 165.5,735ZM158.5,746 157,744 161.5,743.5 161,747ZM167.5,747.5 166,748 165,747 166,746.5 166.5,746 168,746.5ZM174.5,740 173.5,740 173,740 173,739.5 173.5,739.5ZM169.5,749 170,748 171,748.5 170,749.5ZM176,745 176,743.5 177.5,743.5 178.5,743 178.5,744.5 178,745ZM158,718 158.5,717 161.5,718 159,719ZM169.5,738 170,737 171,738 170.5,738.5ZM158,746.5 158.5,746 159,746.5 159.5,747 159,747 159,747ZM165,742.5 167,742.5 166,744ZM160.5,725 162.5,727 158,728ZM154.5,723.5 158.5,725 155.5,727ZM170,729.5 168,730 168,728ZM154,731 155.5,732 154,732 153,732ZM170.5,737.5 174,737.5 172,739.5 169.5,739.5 169.5,738ZM171.5,747 172,747 171.5,748 171,748 170,748 170,747ZM173,733 172,732 173,731 174.5,731 174,732.5ZM153,721 151.5,722 151.5,720.5ZM167,730 166,727.5 169.5,726.5 170.5,729ZM167,730 169.5,728.5 172,730ZM163.5,736.5 165,736 164.5,737 165,738 163,737.5 161.5,737ZM170.5,734.5 170.5,736 171.5,737.5 169.5,737.5 168,737.5 167.5,735.5ZM169,729 166.5,729.5 167.5,728ZM157.5,750 158.5,748.5 160.5,749.5 160,751.5ZM177.5,732.5 181,734 182,735.5 178.5,736 175.5,735Z" fill="#000" stroke="#000" stroke-width="0.8"/>
<path d="M155.5,716.5 157,716 158.5,716.5 157.5,718 156.5,717ZM154,713.5 153.5,714 150.5,715 151.5,713.5 152,711.5 154,711.5ZM157.5,736.5 159.5,736 158.5,737.5 157.5,739 155,738 156.5,737ZM154.5,715.5 155,719 154.5,720.5 151.5,719 152.5,717ZM154.5,724.5 153,723 155.5,721.5 157.5,723ZM164,744 165.5,742 165.5,746Z" fill="#5c4f4b"/>
<path d="M194,729 191.5,729.5 191.5,729 192,728 193.5,727.5ZM210.5,701 206.5,701.5 207.5,698.5 212,698 212.5,699.5ZM204,696.5 203.5,695.5 205,696.5ZM186,715 186.5,714.5 187,715 187.5,715.5 186.5,716.5 185.5,715.5ZM192.5,719 194.5,719.5 193.5,720.5 192.5,719.5ZM204,707 206,706.5 207,709.5ZM203.5,736 202.5,737 202,735.5 203.5,735.5ZM209.5,740.5 210,737.5 211.5,740ZM206.5,691 209,692.5 206.5,692.5ZM203.5,697.5 202,697.5 202.5,696 204,694.5ZM191,718 189.5,721 187.5,718.5ZM202.5,736.5 202,735 203,734 203.5,734.5 204,735 205.5,736.5ZM184.5,718 187.5,718 185.5,721ZM207.5,699 206,700 205,698 205,697 206,696 207.5,698ZM194,722.5 193.5,721.5 193.5,720.5 195.5,720.5 195.5,722ZM194.5,718 192,718 193.5,715.5 194.5,717ZM197,717 197,715 199,715.5 199.5,717 199,718.5ZM203,693.5 205.5,693 205.5,695 203.5,695 201.5,695ZM196,718.5 195.5,717 199,714.5 200.5,714 201.5,716 199,717.5ZM205,740.5 210.5,739.5 209,741.5ZM202.5,694.5 203,694.5 203,696 202,695.5ZM217,694 215.5,694.5 215,692.5 214.5,692.5 216,692 217.5,693ZM204.5,693 205,692 205.5,692.5 205.5,693.5ZM210,694 209,696 208,696.5 206.5,694 208.5,693ZM215,742.5 214.5,742 216,741.5 215.5,742.5ZM189.5,714 188.5,713 188,713 187,711.5 189,711 189.5,712.5ZM211.5,703.5 212,705.5 209,704ZM207,695 206.5,694.5 208.5,693.5 208.5,695 208,696 207,695ZM215.5,700.5 218,701 217,701.5 215,701.5ZM214,742 214,741.5 215.5,741 215,742.5 214,742.5ZM191,729 194.5,727 195.5,728.5 195.5,730 193.5,730.5ZM189,725.5 188,725.5 188,725 189,724 189.5,724.5 189.5,725.5ZM196,712.5 198.5,712.5 199,714 199,715.5 196.5,714.5 196,714.5ZM203,703.5 201.5,701 204,700.5 205,702.5ZM194,726 193,725 194.5,724ZM200.5,727.5 198,727 199.5,725.5 201,726ZM198,721.5 201,722.5 201,723 201,724 198.5,724.5 197.5,722.5ZM196.5,711.5 195,712 195,711 194.5,710.5 195.5,709.5 196,710ZM199.5,723.5 198.5,722.5 198,721.5 201,721 202,721.5 201.5,723ZM195,716 196.5,715.5 196.5,716.5 196,717 195.5,717.5 193.5,716ZM209,695 207,696 205.5,695.5 205.5,693.5 209,693.5ZM201.5,713 201.5,714.5 197,712 198.5,711ZM197,736 194.5,735.5 195.5,733 198.5,733 200,735.5 197.5,736.5ZM199.5,736 201.5,734.5 201,736ZM203,705.5 204,707 202,707.5 201,706ZM196,714.5 198.5,712.5 200.5,714.5 198,716 197,716.5ZM184,719 183.5,718 183.5,718 184.5,718 185,717.5 185,719ZM192.5,728 192.5,726.5 193.5,725.5 196,727ZM211,700 208.5,701.5 207,700.5 209,699ZM184,716 181,713.5 183.5,713 185,713.5 186.5,715ZM203,700.5 204.5,698.5 206.5,698.5 207,699.5 209,700.5 206,701ZM206,705.5 205.5,704 206.5,703 207.5,703 208.5,703 208,704ZM196.5,705 195,707 192,709 193,706ZM207.5,699 211,700 209.5,702 208,703.5 206,702 206.5,700ZM197.5,713 196.5,713 196,713 195.5,712.5 196.5,712 197.5,712.5ZM200.5,718 202,719.5 201,720.5 200,720.5 200,719ZM215.5,692.5 216.5,694 215,694.5 213.5,695 213,693.5ZM214.5,692.5 214.5,691.5 216,692 216,693ZM201,696 200.5,697.5 199,697.5 198.5,697 199.5,696 201,695.5Z" fill="#000" stroke="#000" stroke-width="0.8"/>
<path d="M210.5,694 213.5,694.5 211.5,696 209,695ZM200.5,711.5 202.5,711 203.5,712 203,712.5 202,712.5ZM214.5,694.5 213.5,695 212.5,694.5 213.5,693ZM195.5,724 195.5,722.5 197.5,722.5 197.5,724 197,725ZM189.5,723.5 186,723.5 189,721ZM189,721 188,720 187.5,719.5 188,719.5 189,719.5 189,720ZM196,702 195,703.5 192,703 193,699.5 195,700Z" fill="#5c4f4b"/>
<path d="M209.5,672 211,671.5 211,673 211.5,674 210.5,674 209.5,673ZM214,674 215.5,674.5 215.5,676 215.5,676.5 213.5,676.5 213,675ZM187,718 188,717.5 189,717 189.5,717.5 190,718.5 188.5,718.5ZM229,677 229,680 227.5,679.5 225,680 226,678 226.5,677.5ZM206.5,683.5 206,684 205.5,683.5 206,682ZM219,672.5 221.5,672 221,674 222,674.5 219,674.5 219,673ZM209.5,696.5 206.5,696.5 206,695 209,694.5ZM199.5,733.5 199.5,733 200,732.5 200.5,732 201,733 200,733.5ZM206,679 205,676.5 208,676.5 210.5,677 210.5,678.5ZM214,693 217,696.5 211.5,696.5ZM205,718.5 201,718.5 202.5,717.5 205.5,716.5ZM213.5,704 210,704 210.5,702 211.5,702ZM220.5,666.5 221.5,667.5 222,668 220,668 219.5,668 220,667ZM203,698.5 206.5,698 205.5,701 202.5,701.5ZM205.5,687 206,685.5 208.5,685.5 208,686.5 206,687.5ZM191,727 193,726 193.5,728 190,728.5 189,727ZM212,678 213,678 213.5,678.5 213,678.5 212.5,679 212.5,678.5ZM202,707.5 203,709 200.5,710 197.5,708.5ZM213.5,687 212,690.5 210,689 211,687.5ZM201,716 202,716.5 200,716.5ZM215.5,680 214.5,681.5 211,682 212,680 213.5,678.5ZM193,720 194,721 194,721.5 193,722 191.5,722ZM219.5,696 221.5,698 217.5,699ZM197.5,700 201,701 202,701.5 201.5,703 198,703 198,701ZM214,680 212.5,680.5 211,680.5 210.5,679.5 211.5,677.5 213,679ZM226,688.5 222.5,690 221.5,687.5ZM215,695.5 215.5,697.5 214.5,697.5 214,697 212.5,696.5 214,696ZM220.5,697.5 220.5,698.5 219,698.5 218.5,697.5 219.5,697.5 220.5,697ZM196.5,717.5 197.5,717 198,718ZM222,671.5 224,673.5 222.5,674.5 221,674 220,672ZM224.5,687.5 223.5,688 223,687.5 223,686.5ZM200.5,708.5 200.5,711 198,708.5ZM206.5,698 204,699 205,697ZM209,708.5 211.5,709 212,712.5ZM209.5,679 208.5,678 210,677.5 213.5,677 211.5,679ZM200,702 201.5,702 201,703.5 199,703 199,702.5ZM200,720 201.5,719 203.5,720.5 204.5,722.5 203,722 201.5,721.5ZM229,678.5 225,680 227,676.5ZM191,725 188,724 193.5,723ZM203.5,681 205.5,678.5 208,680.5ZM197,703.5 196,703 196.5,702 197,702 198,703.5ZM212,704.5 212,707 209,706ZM198,703.5 198,704.5 197.5,705 197,704ZM220.5,684 221,681 222,683 222,685ZM208.5,691.5 204.5,693.5 203.5,691ZM186.5,717 186,717.5 184.5,717.5 185,716 185.5,716ZM226.5,684 224.5,685 223.5,683.5 224,682ZM200.5,701 200,701.5 199,700.5ZM223.5,678 222,678 222.5,676.5ZM222,666 222.5,667 222,667 221.5,668 221.5,666.5ZM202.5,707 201,707 202.5,706ZM197,702.5 197,701.5 199,700.5 200.5,702.5ZM199.5,731.5 197.5,732 197.5,730ZM197.5,731.5 197.5,733 196.5,732.5ZM215.5,688 216.5,689 216,689.5 215.5,689.5 214.5,689ZM200.5,711.5 202.5,710.5 203.5,713 201,712.5ZM224,687.5 225.5,685.5 227,688.5ZM210,712 209.5,713 208.5,713 208,711.5ZM206,710.5 207.5,709 207.5,710 208.5,711.5 207,712.5 205,711ZM220.5,670.5 222.5,668 224.5,670 223,672ZM211.5,688.5 210.5,690 209,690.5 209,689 210.5,688.5ZM221.5,688.5 225,687 226.5,688.5 224,689.5ZM210,684.5 209,684 209,683.5 210.5,682.5 212,682.5 211,685.5ZM203.5,675 206.5,676.5 207.5,678.5 205,678 203,677.5ZM212,693.5 209.5,690 214,690.5ZM222,689 220.5,687.5 222.5,687.5 223.5,687.5 225,688.5 224,689.5ZM216,670.5 212.5,670.5 216,669.5ZM227.5,688 225,690 223,690 223.5,688ZM198,728 199,731.5 195,732ZM208.5,703 210,706.5 208,706 205,705ZM214.5,678.5 214,679 214,678 215,677.5 215.5,678.5ZM207,681 204,681.5 204.5,680 206,679 207.5,680ZM201,728.5 197.5,728.5 197.5,727 199.5,727ZM203.5,709 203,711 201.5,710 201,710.5 201.5,709 202.5,709ZM216.5,673.5 216.5,672 218,673 218.5,674 219.5,675 217.5,674.5ZM187.5,713.5 186,711 188.5,711.5ZM198.5,719 198,717 200,719ZM216,699 212.5,701.5 211,699.5ZM214,679.5 212.5,681.5 212,680.5ZM210.5,712 209,710.5 211.5,710ZM212.5,669 214,670.5 213,672 209.5,670ZM205.5,706 205,706 205.5,705ZM211.5,683 209,681.5 211,681 211.5,681ZM218.5,686 216.5,688 214.5,686 217.5,685ZM201,707.5 203.5,707 204,709ZM225.5,694.5 226.5,695 223.5,696 223.5,695 224,693.5ZM214.5,676.5 214,677.5 213.5,677.5 213,677.5 213.5,676.5 214,676.5ZM213,679.5 209.5,680.5 208,678.5 210,676.5 212,676.5 213,677.5ZM204,716 207,715 204.5,718ZM222,682.5 224,681 224.5,682.5ZM217.5,700.5 216.5,699.5 219,699.5 219.5,701ZM221,687 221,688.5 218.5,687 218.5,686.5 219.5,684 222,684.5ZM191.5,723.5 188.5,723 187.5,719 190.5,718.5 191.5,720.5ZM229,674 229.5,675.5 226,676 226,675ZM207.5,711 209,711.5 209.5,713.5 207,713ZM206,685.5 207.5,686 208,686.5 207,686.5 206,687 206.5,686ZM209.5,699.5 209.5,698 211,697.5 212,698 211,700ZM204.5,703 202,704 201,703 201,702.5 203,701.5ZM210,696 208.5,697.5 206.5,696.5ZM202.5,709 202,709 201,708 200,707.5 202,706.5 203,707.5ZM212,695.5 210.5,695 212,694.5ZM217,700.5 216.5,701 215,700 216,699 217,699 217.5,700ZM224,691.5 224.5,692 223,692ZM216,684 213,685.5 215,682 218,682ZM218,678 218.5,679.5 217,679.5 216.5,678.5 217,678.5ZM188.5,723.5 185,720.5 188.5,720.5ZM205,700 206.5,699 207.5,697.5 209.5,697.5 208.5,700 208,701ZM199.5,712 199.5,710.5 200.5,710.5 201.5,711 202,712.5ZM209,684.5 211,683.5 212.5,684 215,685 212,685.5 210.5,685.5ZM228,675.5 225.5,675 223.5,674.5 224.5,672.5 226.5,674 228,674.5ZM222.5,691.5 222,692.5 221.5,691ZM183.5,718 181,718.5 183,715.5ZM200,704.5 200,702 203.5,704.5ZM224,678 224,679.5 221,680 221,678.5ZM213.5,677 213.5,677.5 213,679 213,678 212,677.5ZM217,689 219,690.5 219.5,691.5 219,693 217.5,691.5ZM205,718 206,718.5 202.5,719.5 202.5,718ZM206.5,686.5 205.5,686.5 205,686 207,686ZM216.5,669 220,669 221.5,669.5 223,670 219.5,671.5 217.5,670.5ZM201,707.5 200.5,711 197,708.5ZM218,668.5 217.5,668 218,667.5 218.5,666 220,666.5 220,668.5ZM221.5,681 220.5,680.5 220,680 221,679.5 221.5,679 222,680ZM213.5,702 215,701.5 215.5,702.5ZM209,683.5 209.5,684 208.5,685 206.5,685 207,683ZM200.5,721.5 198,723.5 198.5,721.5 198.5,720.5 201,720ZM226,665.5 228,665.5 228,666 227,667 226,667 226,666.5ZM210,679 209.5,678.5 210,678 210.5,678 211,678.5Z" fill="#000" stroke="#000" stroke-width="0.8"/>
<path d="M208.5,692 206,695 205,693.5ZM205.5,696 206,695 207.5,694 208,695.5 207.5,696 204.5,697.5ZM223.5,681 222.5,681.5 222,681.5 221.5,681 222,680.5 222.5,680.5ZM214,705 215,703.5 216.5,703.5 215.5,705ZM201,713.5 196.5,713 198,711 199.5,711.5ZM208,700.5 209,699.5 210.5,700.5 210,701.5 208,702ZM198,712.5 198.5,712.5 198,713.5 197.5,713.5 196.5,713.5 197,712ZM222.5,695.5 225,695 225.5,696.5 224,698 223,697 222.5,696.5ZM211,679 213,678 214.5,679.5 214,681.5 211.5,680.5 211.5,680ZM220.5,671.5 220.5,669.5 221.5,670 223,670 222,672 221.5,671.5ZM195.5,711.5 193.5,712 193.5,710.5ZM197.5,706.5 201,708 199.5,709ZM200,724.5 198.5,723.5 200.5,721.5 201.5,723 201.5,724ZM206,710 207.5,711.5 205.5,712.5 204.5,711ZM190,710.5 191,710.5 192.5,711 191.5,712Z" fill="#5c4f4b"/>
<path d="M219.5,740 221,740 221,740.5 220.5,741 220,742 219,740.5ZM228,753.5 229,753 229.5,754.5 228.5,755ZM212,740.5 212,739.5 214,738 214,740ZM220.5,744 220.5,745 218,744.5 218,744.5 219,742.5 220.5,742ZM227.5,748 228,749.5 225.5,749ZM233.5,755.5 235,753.5 235,756ZM217,740.5 219,742 217.5,743.5 217,743.5 216,742.5 216,741ZM212,743 210.5,741.5 211.5,741 213,740.5 213.5,742ZM225.5,755 225,753 228,751.5 229.5,753.5 229,754 226.5,755Z" fill="#000" stroke="#000" stroke-width="0.8"/>
<path d="" fill="#5c4f4b"/>
<polygon points="803.2,604.3 806.5,604.3 806.5,648.6 804.3,644.2 802.7,628.7 804.3,617.6" fill="#024268"/>
<path d="M802.5,654 803,652 805,653 807,655.5 805,656ZM799,628.5 798.5,627.5 800,626.5 802.5,628 800.5,629ZM796,651 798,650.5 797.5,652.5 794.5,651.5ZM801.5,596 801.5,594 802,593.5 804,593.5 804.5,595ZM789.5,656 790,655 791.5,655 792,655 792,656 791,657ZM805,573.5 802.5,573.5 802,572ZM795,633 795.5,634.5 793.5,635 792.5,634.5 792,634 792.5,633.5ZM802,585 803,586.5 803,588.5 800.5,587.5 798.5,586.5 801,585ZM792.5,575 794,576.5 793,577.5 791,576.5ZM787.5,651 790,650 790.5,652 791,654 787,654 786,651.5ZM806,571 805,569.5 804.5,568.5 806,569 807,569.5ZM799.5,633.5 798,632.5 800.5,631.5ZM798.5,594 798,595 796.5,594 798,593ZM801,612.5 801.5,615.5 797.5,614.5ZM793,619.5 794,619.5 794,620 793.5,621 793.5,620.5 792.5,620.5ZM788,654.5 788.5,653 790,654.5ZM798,592 798,593 797.5,593.5 796.5,593ZM799,607 798.5,606 800,605.5 801,606 803.5,606 802.5,608.5ZM796.5,637 798,638.5 795,640 793,637.5ZM796,653.5 800,654.5 797,656.5ZM802,640.5 802,641 801,642 800.5,640.5ZM798.5,608.5 797.5,609.5 796,609 796.5,608 797,607.5ZM804.5,563 802.5,563 802,564 801.5,562.5 801,561 803,560ZM801.5,580.5 801,581 800.5,580.5 801,580 801,579.5 802,580ZM796.5,646 797,642.5 799,644.5ZM792.5,614.5 794.5,613 797.5,614.5 795,617ZM803.5,601 803,603.5 801,602ZM786.5,618 789,618 788.5,618.5ZM802.5,575.5 801.5,577.5 800,577 799,575ZM800.5,603.5 801,604 801,604 800.5,605 799.5,605.5 799,604.5ZM801,574.5 800,576 799,574.5 798.5,573.5 800.5,574ZM798,640.5 799.5,643.5 796,644 795,644.5 796.5,641.5ZM802,605 799,605.5 798.5,604 799.5,603.5 802,603.5 803,605.5ZM793.5,593.5 797.5,594 795.5,596ZM806.5,654.5 805.5,654.5 805.5,653.5 807,654ZM804.5,654.5 806.5,653.5 806,655ZM798.5,572.5 798.5,573.5 798,574 797.5,572.5ZM799,607 798,607.5 798,607 798,606.5 799,606ZM796.5,585 797.5,584 799,585 801,587 799.5,588.5 796.5,588ZM790,655.5 790,656.5 789,656 789,655ZM798.5,607 799.5,607 799.5,607.5 799,607.5 798.5,607ZM794,653.5 794.5,652.5 796.5,653.5ZM804.5,639 803,640 802.5,640 802,639 802,638.5 804,638.5ZM803.5,645.5 805,646.5 803.5,647 803,646ZM786,651.5 787.5,651 791,651 790,653 791.5,654 787,655ZM803.5,642 807,644.5 804,646.5 801.5,644.5ZM794,614 795,615.5 793,615.5ZM794,618.5 793,619 792.5,618 793,617.5 794,617 794,618ZM805,566.5 804,565.5 803.5,565 803,563.5 806.5,564.5 806,565ZM801.5,620 801.5,618.5 803,619.5ZM793.5,623 794,621.5 794.5,621 797.5,619 797.5,621.5 796.5,622ZM796,581 796.5,581.5 796,582 795.5,581.5ZM799,591.5 800,591 800,592.5ZM799,601.5 801,602 798.5,604.5ZM804.5,635.5 803.5,634.5 803.5,634 805,633.5ZM793.5,615 793.5,614 794.5,614.5 795,614.5 794,615ZM806.5,638.5 806,639 804.5,638 805,637.5 806,637.5ZM796,640 794.5,639.5 798.5,638 798.5,639 798,640ZM804.5,637.5 804,639.5 801,638 801.5,636.5 804,637.5ZM796.5,574.5 797,575 795.5,575.5 795.5,574.5ZM795,634.5 797,635 796,636 795.5,635.5ZM803.5,567 804.5,568 802.5,567.5 801.5,567.5 801.5,566.5ZM800.5,587 799.5,587.5 799,586.5 799.5,586 800,586.5ZM797.5,628.5 796,627 797,626.5 798,626.5ZM802,633.5 802.5,631.5 805,631.5 806,632 806,633.5 804,633.5ZM801.5,609.5 803,610 801.5,611 800.5,612.5 798.5,610.5 799,610ZM804,640 803,639.5 801.5,638 803.5,637 804.5,638ZM799,585.5 803,585 802,586.5 800.5,587ZM799,635.5 798,636.5 797.5,637.5 795.5,636.5 797,635 797.5,635ZM800,624.5 799,625.5 798.5,624.5ZM789,594 786.5,594 789,591.5ZM796,577 797.5,577.5 795.5,577.5ZM796.5,585 796,584 797,584 798,584 797.5,585ZM802.5,639.5 803,640.5 801.5,640ZM791.5,655.5 790.5,656.5 789,656.5 788.5,655 791,654.5ZM794,616.5 795,617.5 792.5,619.5 790.5,617.5 792,617ZM804,625.5 806,625 806.5,625 807,626.5 805.5,626ZM806.5,650 807,653 805,653.5ZM803.5,568 803.5,568.5 802.5,568 803,567.5ZM798.5,630 799.5,629.5 800,629.5 800.5,630.5 798,631ZM796,620.5 795,620.5 796,619.5 798,620 798,620.5 796.5,621.5ZM793,620.5 793.5,619.5 795.5,619 797,621.5 794.5,621.5ZM800,580.5 798.5,582 796.5,581 797,578.5 799.5,578 800.5,577.5ZM797,648 798.5,650.5 796.5,650.5 794.5,650 794.5,648ZM797,590 794.5,591.5 794.5,590ZM789.5,618 788,617.5 788.5,617 790,617 790.5,617.5ZM804,574.5 807.5,573.5 808.5,575.5 809,576.5 806,577.5 804,576ZM798,624.5 798,623.5 797.5,622.5 798,620.5 801,622.5 799.5,623ZM797.5,591 798.5,591 799,592 799,592 797.5,592 796.5,591.5ZM798.5,573 800,573 799.5,576 797,574.5ZM804,602.5 799.5,604 801,601.5ZM800.5,622 801.5,620.5 802,620 804.5,621.5 804,622.5 802,622ZM805,641 806,640.5 807,642 805,642.5 804,641.5ZM802.5,563 805,562.5 808,563.5 806,565.5ZM799,652 799.5,653.5 797.5,654 797,652 798,651.5ZM799,584.5 798.5,585 798,586 796.5,584.5 796,583.5 798.5,583.5ZM797,600 796,602.5 794.5,600.5ZM798,653.5 800,652 800,653.5ZM794.5,647 791,647 790.5,645 792.5,644.5 795,645ZM794.5,606.5 796,607 796,608.5 793.5,608.5 793,607ZM799,630.5 798,631 798.5,629.5Z" fill="#000" stroke="#000" stroke-width="1"/>
<polygon points="803.2,604.3 806.5,604.3 806.5,648.6 804.3,644.2 802.7,628.7 804.3,617.6" fill="#024268"/>
<polyline points="784.3,654.2 787.7,664.2 782.1,673 787.7,681.9 792.1,690.8 789.9,699.6 794.3,708.5 787.7,715.2 787.7,720" fill="none" stroke="#000" stroke-width="3.8"/>
<polyline points="784.3,654.2 787.7,664.2 782.1,673 787.7,681.9 792.1,690.8 789.9,699.6 794.3,708.5 787.7,715.2 787.7,720" fill="none" stroke="#024268" stroke-width="1.8"/>
<polyline points="790.5,690 794.9,698.8 794,707.6 788.8,712.8 790.5,719.9 784.4,723.4 783.5,732.2" fill="none" stroke="#000" stroke-width="3.8"/>
<polyline points="790.5,690 794.9,698.8 794,707.6 788.8,712.8 790.5,719.9 784.4,723.4 783.5,732.2" fill="none" stroke="#024268" stroke-width="1.8"/>
<polyline points="229.1,662.8 235.2,661.4" fill="none" stroke="#000" stroke-width="1.3"/>
<polyline points="242.1,664.5 249,662.8" fill="none" stroke="#000" stroke-width="1.3"/>
<polyline points="258.4,661 267.9,662.4 276.6,664.5 285.2,665.3" fill="none" stroke="#000" stroke-width="1.3"/>
<polyline points="270.5,656.7 271.7,657.6" fill="none" stroke="#000" stroke-width="1.3"/>
<polyline points="249,678.3 252.4,683.4 254.1,693.8 250.7,702.4 247.2,707.6" fill="none" stroke="#000" stroke-width="1.3"/>
<polyline points="243.8,699 249,693.8" fill="none" stroke="#000" stroke-width="1.3"/>
<polyline points="240.3,714.5 237.8,717.1" fill="none" stroke="#000" stroke-width="1.3"/>
<polyline points="233.4,724 236.9,722.2" fill="none" stroke="#000" stroke-width="1.3"/>
<polyline points="224,730.9 228.3,728.3" fill="none" stroke="#000" stroke-width="1.3"/>
<polyline points="257,661 264,661.9 279.8,665.4 285.1,664.5" fill="none" stroke="#000" stroke-width="1.3"/>
<polyline points="228.8,661.9 235,661" fill="none" stroke="#000" stroke-width="1.3"/>
<polyline points="241.1,664.5 245.5,664" fill="none" stroke="#000" stroke-width="1.3"/>
<polyline points="304.4,660.1 308.8,661.9 307.9,658.4" fill="none" stroke="#000" stroke-width="1.3"/>
<polyline points="365.1,655.7 381.7,651.3 399.3,648.7" fill="none" stroke="#000" stroke-width="1.3"/>
<polyline points="406,648.7 423.6,649.2 437.6,649.9" fill="none" stroke="#000" stroke-width="1.3"/>
<polyline points="479.8,665.4 488.6,672.4 497.4,679.4 502.7,686.5" fill="none" stroke="#000" stroke-width="1.3"/>
<polyline points="536.1,720.8 546.6,716.4 557.1,709.3 560.7,705.8" fill="none" stroke="#000" stroke-width="1.3"/>
<polyline points="562.4,703.2 569.4,699.7" fill="none" stroke="#000" stroke-width="1.3"/>
<g fill="none" stroke="#826a0a" stroke-width="1">
<path d="M181.7,6C184.5,9.3 188.7,11.9 192.3,18.3C196.8,26.4 197.4,28.6 199.3,37.6C201.2,46.9 200.5,49.2 200.7,58.7L200.2,90.4C199.5,97.0 198.8,98.8 195.8,104.4C193.7,108.3 190.4,107.2 188.8,111.4C186.0,118.9 187.6,124.0 185.3,132.5C183.9,137.6 182.8,139.0 180,143.1C178.2,145.8 176.1,146.7 174.7,148"/>
<polyline points="200.7,71 206,69.3"/>
<path d="M206,69.3C208.8,68.4 212.8,69.2 216.5,65.8C222.1,60.6 224.9,58.2 227.1,49.9L228.8,18.3C231.2,10.8 237.8,9.3 241.1,6"/>
<path d="M241.1,6C243.0,8.8 245.0,11.8 248.2,16.5C252.9,23.5 255.2,24.6 258.7,32.4C262.4,40.6 259.3,44.2 264,51.7C267.6,57.5 270.0,58.0 276.3,60.5C281.5,62.5 283.2,62.7 288.6,61.4C296.1,59.5 297.4,54.7 304.4,53.5C309.4,52.7 310.7,54.4 315,57L339.6,74.5L364.2,92.1L381.7,107.9L406,120.2"/>
<path d="M406,99.1C402.3,99.6 398.1,98.7 392.3,100.9C385.3,103.6 383.1,104.1 378.2,109.7C371.7,117.1 371.2,121.0 367.7,129C365.7,133.5 364.7,134.7 365.1,139.6C365.5,143.8 368.3,145.8 369.4,148"/>
<path d="M406,100.9C409.8,101.4 414.0,100.7 420.1,102.7C426.1,104.7 428.2,105.5 432.4,109.7C435.4,112.7 435.0,114.3 435.9,118.5C437.3,124.6 438.3,126.2 437.6,132.5C436.7,139.8 433.8,143.9 432.4,148"/>
<polyline points="406,120.2 411.3,127.3 406,132.5"/>
<path d="M472.8,6C472.6,10.7 473.3,15.8 471.9,23.6L465.8,46.4C461.1,53.3 457.5,52.6 449.9,56.1C443.5,59.0 440.1,55.7 435,60.5C429.5,65.8 431.9,69.3 428.8,76.3C425.9,82.8 425.3,84.2 421.8,90.4C418.2,96.9 416.3,97.8 413,104.4C410.8,108.9 409.9,110.0 409.5,115C409.1,120.6 410.8,124.0 411.3,127.3"/>
<path d="M588.8,6C588.3,10.7 585.7,15.7 587,23.6C588.1,30.6 589.8,32.0 594,37.6C597.0,41.7 600.5,40.2 602.8,44.7C605.6,50.3 605.2,52.4 604.6,58.7L599.3,81.6C599.3,89.1 606.7,90.2 604.6,97.4C602.3,105.3 592.4,103.4 590.5,111.4C588.7,119.0 593.5,121.2 597.6,127.3C600.4,131.4 603.8,132.4 606,134.3"/>
<path d="M406,137.8L437.6,132.5L479.8,137.8C484.6,138.1 485.6,136.2 490.4,136.1L515,136.9C522.7,139.3 525.3,145.0 529,148"/>
<path d="M532.5,148C535.3,149.9 538.1,152.3 543.1,155C546.8,157.0 547.7,158.0 551.9,158.5C557.4,159.2 558.7,157.2 564.2,157.7C572.1,158.4 573.8,160.7 581.7,161.2C587.3,161.5 588.5,160.4 594,159.4C599.4,158.4 602.8,157.5 606,156.8"/>
<polyline points="606,155.9 616.5,149.8 646.4,148"/>
<path d="M806,71.9L773,81.6L746.6,93.9L711.4,115L676.3,132.5L649.9,148"/>
<polyline points="606,134.3 611.3,143.1 613,148"/>
<path d="M6,257.3L37.6,255.6C44.8,255.0 46.5,255.1 53.5,253.4L76.3,246.4C84.3,243.8 86.0,243.1 93.9,240.3C101.8,237.5 103.6,237.2 111.4,234.1C119.5,230.9 122.0,228.8 129,226.2C132.8,224.8 133.8,224.9 137.8,224.4C143.9,223.7 145.8,223.4 151.9,223.6C155.9,223.8 158.4,224.8 160.7,225.3"/>
<path d="M175.6,148C175.6,149.9 176.9,152.1 175.6,155L162.4,177.9L146.6,200.7C145.3,202.8 144.2,203.5 144.8,206C146.2,212.1 150.0,218.9 151.9,223.6"/>
<path d="M160.7,223.6C161.6,222.9 162.3,221.4 164.2,220.9C167.2,220.2 169.1,220.0 172.1,220.9C174.2,221.6 174.7,222.4 175.6,224.4C176.4,226.2 176.5,227.0 175.6,228.8C174.7,230.6 174.1,231.1 172.1,231.5C168.1,232.2 163.7,233.6 160.7,231.5C157.8,229.5 160.7,225.7 160.7,223.6"/>
<path d="M175.6,223.6C177.2,222.7 179.0,221.8 181.7,220.1C186.2,217.3 187.6,216.3 192.3,213C195.5,210.8 195.9,209.8 199.3,207.8C202.1,206.2 204.2,205.8 206,205.1"/>
<polyline points="164.2,231.5 167.7,253.4 170.3,278.1 173.8,290"/>
<path d="M206,204.6C209.8,202.2 215.4,199.3 220.1,195.5C222.3,193.7 221.2,191.8 223.6,190.2C228.3,187.1 231.1,186.3 237.6,184L269.3,174.4L293.9,166.5C298.5,165.2 299.7,165.7 304.4,164.7L329,159.4C335.3,158.4 337.1,160.7 343.1,158.5C349.5,156.2 350.7,152.6 355.4,149.8C357.6,148.5 359.3,148.5 360.7,148"/>
<path d="M369.4,148C371.7,150.8 373.5,154.5 378.2,158.5C382.4,162.1 383.5,163.3 388.8,164.7C394.1,166.1 396.5,164.7 401.1,164.7C403.3,164.7 404.7,164.7 406,164.7"/>
<polyline points="406,120.2 405.5,129 404.6,148"/>
<path d="M403.7,148C403.0,152.5 402.6,157.2 401.1,164.7C399.4,173.0 397.2,174.6 396.7,183.1L398.4,209.5L398.4,235.9C397.6,244.0 394.6,245.3 394,253.4C393.4,261.3 395.2,263.1 395.8,271C396.4,279.5 396.5,284.9 396.7,290"/>
<path d="M360.7,148C363.0,145.8 364.7,142.3 369.4,139.6C374.4,136.8 376.0,136.5 381.7,136.1C388.1,135.7 389.4,137.8 395.8,137.8C400.5,137.8 403.3,136.6 406,136.1"/>
<path d="M417.4,148C420.4,151.0 424.1,153.9 428.8,159.4L444.7,179.6C446.6,182.7 444.0,184.8 446.4,187.5C450.1,191.7 454.1,190.8 458.7,195.5L472.8,214.8C477.7,221.8 478.6,225.5 483.3,230.6C485.7,233.2 487.1,232.7 490.4,234.1C496.0,236.4 500.7,238.0 504.4,239.4"/>
<polyline points="406,165.6 416.5,162.1 428.8,158.5 432.4,148"/>
<path d="M504.4,240.3C506.3,238.9 508.6,235.9 511.4,235C513.1,234.4 513.2,236.4 515,236.8C517.8,237.5 519.2,239.0 522,237.6C528.1,234.5 531.0,231.3 537.8,225.3C544.5,219.4 546.0,218.0 551.9,211.3C557.9,204.6 558.5,202.5 564.2,195.5C568.8,189.8 570.0,188.7 574.7,183.1C577.9,179.2 578.5,178.2 581.7,174.4C586.8,168.3 590.7,164.1 594,160.3"/>
<polyline points="504.4,240.3 497.4,257 490.4,271 481.6,290"/>
<path d="M522,238.5C523.9,240.2 525.7,242.1 529,244.7C532.1,247.2 534.7,246.2 536.1,249.9C538.4,256.0 535.9,260.0 537.8,267.5C539.1,272.7 541.7,273.0 543.1,278.1C544.5,283.3 543.8,286.8 544,290"/>
<path d="M664,148C664.9,149.4 666.0,150.9 667.5,153.3C670.8,158.4 672.1,162.2 676.3,167.3C678.8,170.4 681.1,169.3 683.3,172.6C686.1,176.7 684.0,179.0 686.8,183.1C689.0,186.4 690.0,187.5 693.9,188.4C701.4,190.1 706.0,186.2 715,189.3C722.7,192.0 723.0,195.2 729,200.7L750.1,221.8C754.9,227.5 756.1,230.3 758.9,235.9C760.4,238.8 759.9,239.7 760.7,242.9C762.1,248.5 762.6,250.7 764.2,257C766.5,266.4 767.1,269.3 769.4,278.1C770.8,283.5 772.0,286.8 773,290"/>
<path d="M715,189.3C718.7,188.4 722.7,187.4 729,185.8C736.9,183.8 738.6,183.0 746.6,181.4C754.5,179.8 756.7,180.5 764.2,178.8C769.1,177.7 769.8,176.1 774.7,175.2L799.3,172.6C802.5,172.6 804.2,174.5 806,175.2"/>
<path d="M806,222.7L781.7,230.6L760.7,242.9L739.6,253.4C733.9,256.4 732.4,256.7 727.3,260.5C719.8,266.1 719.5,269.4 711.4,274.5C704.2,279.0 701.8,278.4 693.9,281.6C686.0,284.8 681.9,286.4 676.3,288.6C674.7,289.2 673.7,289.6 672.8,290"/>
<path d="M739.6,253.4C741.5,257.2 741.8,262.3 746.6,267.5C751.7,273.0 754.6,271.9 760.7,276.3C765.7,279.9 767.5,281.4 771.2,285.1C773.1,287.0 773.8,288.7 774.7,290"/>
<path d="M173,290C172.5,294.7 170.8,299.6 171.2,307.6C171.6,315.6 173.1,317.2 174.7,325.1L180,351.5C181.6,359.4 182.9,361.0 183.5,369.1C184.1,377.8 184.5,379.9 182.6,388.4C180.5,397.6 178.5,399.2 174.7,407.8C171.8,414.2 170.9,415.5 167.7,421.8C165.4,426.4 163.8,429.3 162.4,432"/>
<path d="M396.7,290C396.5,292.8 395.4,295.8 395.8,300.5C396.2,305.4 397.7,306.2 398.4,311.1C399.3,317.4 398.6,318.8 399.3,325.1C400.2,333.1 401.2,334.7 402,342.7C402.8,350.6 402.8,352.4 402.8,360.3C402.8,365.8 401.8,367.1 402,372.6C402.2,376.6 403.2,377.4 403.7,381.4C404.4,387.5 404.0,389.8 404.6,395.4C405.0,398.6 405.6,400.6 406,402.5"/>
<path d="M315,432C318.7,427.9 322.5,423.3 329,416.5C334.4,410.8 335.2,408.4 341.3,404.2C345.4,401.3 347.0,401.6 351.9,400.7C357.4,399.7 358.8,400.9 364.2,399.8C369.1,398.9 370.2,398.3 374.7,396.3C378.1,394.8 379.0,394.5 381.7,391.9C385.9,387.9 386.9,386.4 390.5,381.4C393.2,377.7 392.8,376.1 395.8,372.6C398.0,370.0 399.3,369.6 402,368.2C403.6,367.3 404.9,367.5 406,367.3"/>
<polyline points="388.8,386.3 399.3,385.8 406,381.4"/>
<path d="M481.6,290L467.5,309.3C462.4,317.0 463.1,320.0 457,326.9C451.0,333.7 448.1,333.5 441.1,339.2C435.4,343.8 434.0,344.6 428.8,349.8C424.5,354.1 424.2,355.7 420.1,360.3C417.1,363.6 416.8,365.0 413,367.3C410.2,369.0 407.9,368.6 406,369.1"/>
<path d="M406,381.4C407.4,379.5 409.5,377.9 411.3,374.4C412.8,371.5 410.4,369.3 413,367.3C416.3,364.7 418.7,365.3 423.6,364.7L446.4,362.9C455.9,362.7 458.0,364.3 467.5,363.8L493.9,360.3C501.9,359.0 503.4,357.7 511.4,356.4L543.1,352.4C552.6,351.0 555.8,350.3 564.2,348.9C568.9,348.1 571.9,347.6 574.7,347.1"/>
<path d="M575.6,348C576.1,345.9 575.1,342.9 577.4,340.1C579.9,337.0 581.3,336.5 585.3,336C589.0,335.6 590.8,335.5 593.2,338.3C595.9,341.5 595.7,343.5 595.5,348C595.3,352.2 595.2,353.8 592.3,356.8C589.7,359.5 588.1,359.6 584.4,359.4C580.9,359.2 579.6,358.7 577.4,355.9C575.2,353.0 576.1,350.1 575.6,348"/>
<path d="M585.3,348C582.5,343.3 579.4,337.4 574.7,330.4C571.9,326.2 571.4,325.0 567.7,321.6C562.7,317.0 558.7,317.0 555.4,312.8C553.5,310.3 556.7,308.7 555.4,305.8C553.5,301.6 551.5,301.0 548.4,297C546.0,293.9 544.5,291.9 543.1,290"/>
<path d="M583.5,293.5C581.2,297.3 577.7,300.8 574.7,307.6C571.3,315.1 568.0,317.1 569.4,325.1C570.7,332.3 575.8,331.5 580,337.5C583.0,341.8 583.9,345.2 585.3,348"/>
<polyline points="574.7,347.1 585.3,348 594.9,351.5 606,353.3"/>
<path d="M585.3,348C584.3,350.8 585.0,354.7 581.7,358.5L564.2,372.6C560.5,376.1 559.5,376.9 557.1,381.4C553.9,387.3 554.9,389.4 551.9,395.4C549.3,400.5 548.1,401.3 544.8,406C540.2,412.4 539.0,413.7 534.3,420.1C530.3,425.4 527.8,428.8 525.5,432"/>
<polyline points="585.3,348 592.3,335.7 606,327.8"/>
<path d="M585.3,348C585.8,351.3 585.2,355.0 587,360.3C588.5,364.7 590.0,365.1 592.3,369.1C595.5,374.6 596.3,375.8 599.3,381.4C602.5,387.5 604.2,391.4 606,395.1"/>
<path d="M406,404.2C406.7,404.7 408.1,404.7 408.6,406C409.5,408.3 408.4,410.0 409.5,413C411.2,417.7 412.4,418.9 414.8,423.6C416.7,427.4 418.0,429.8 419.2,432"/>
<path d="M606,327.8C608.8,326.1 611.5,323.8 616.5,321.6C623.4,318.6 625.6,319.6 632.4,316.4C640.7,312.5 642.2,310.9 649.9,305.8C656.5,301.4 657.4,299.5 664,295.3C668.5,292.4 671.7,291.4 674.5,290"/>
<path d="M606,354.1C608.8,355.8 611.3,358.6 616.5,360.3C624.5,362.9 627.1,362.3 635.9,363.8L658.7,367.3L681.6,367.3C688.9,368.0 690.2,369.5 697.4,370.8C703.7,371.9 705.0,372.6 711.4,372.6C719.4,372.6 721.0,370.8 729,370.8C737.0,370.8 739.6,372.4 746.6,372.6C750.6,372.7 751.6,372.8 755.4,371.7C759.6,370.4 760.3,369.5 764.2,367.3C771.2,363.3 773.7,361.2 781.7,356.8C787.9,353.4 790.6,352.8 795.8,349.8C798.5,348.2 798.8,347.4 801.1,345.4C803.3,343.5 804.7,342.2 806,341"/>
<path d="M606,395.4C607.4,397.7 608.3,400.7 611.3,404.2C616.0,409.8 618.1,411.0 623.6,416.5C627.6,420.5 629.1,421.2 632.4,425.3C634.5,428.0 635.0,430.2 635.9,432"/>
<polyline points="783.5,290 788.8,297 799.3,304.1 806,306.7"/>
<path d="M6,460.1C9.8,460.6 13.7,461.3 20.1,461.9C29.5,462.8 31.7,462.5 41.1,463.6L64,467.1C72.2,469.1 74.6,470.7 81.6,473.3C85.6,474.8 86.2,476.2 90.4,476.8C95.1,477.4 96.2,476.7 100.9,475.9C105.7,475.1 106.5,473.7 111.4,473.3L134.3,473.3C139.5,474.1 140.1,476.5 144.8,478.6C147.9,480.0 148.5,481.0 151.9,481.2C158.9,481.7 162.6,481.3 171.2,480.3C179.2,479.3 180.8,478.0 188.8,476.8C196.5,475.7 201.4,475.6 206,475.1"/>
<path d="M162.4,432C162.2,435.8 162.7,439.9 161.5,446.1C160.3,452.6 158.9,453.7 157.1,460.1C155.3,466.4 155.0,468.6 153.6,474.2C152.8,477.3 153.3,478.3 151.9,481.2C149.6,485.9 148.0,487.0 144.8,491.8C141.6,496.5 140.0,497.1 137.8,502.3C135.2,508.3 135.7,510.0 134.3,516.4C132.9,522.7 132.6,524.1 131.7,530.4C130.7,537.5 130.0,539.0 129.9,546.2L130.8,574"/>
<polyline points="146.6,479.5 148.4,472.4 154.5,468.9"/>
<path d="M206,476.5L232.4,474.7L257,474.2C266.0,472.8 268.8,470.8 276.3,468C280.4,466.4 281.5,466.2 285.1,463.6C290.7,459.6 292.5,458.5 297.4,453.1C301.3,448.9 300.7,446.9 304.4,442.5C308.7,437.3 312.2,434.8 315,432"/>
<path d="M257,474.2C255.1,478.4 252.7,482.7 249.9,490C247.9,495.4 249.0,497.1 246.4,502.3C243.0,509.2 239.6,510.3 236.8,516.4C235.2,520.0 237.7,521.6 235.9,525.1C233.3,530.2 230.9,530.8 227.1,535.7C222.2,541.9 219.9,542.6 216.5,549.8C213.8,555.6 213.9,557.4 213.9,563.8C213.9,568.5 215.8,571.3 216.5,574"/>
<polyline points="406,535.7 390.5,553.3 369.4,574"/>
<path d="M522,432C519.2,436.5 517.7,442.4 511.4,448.7C504.8,455.3 502.3,455.9 493.9,460.1C486.4,463.9 484.2,463.6 476.3,466.3C469.2,468.7 467.9,470.3 460.5,471.5C451.1,473.1 445.0,472.2 439.4,472.4"/>
<path d="M420.1,432C421.0,434.3 422.1,436.8 423.6,440.8C425.9,446.9 426.2,448.6 428.8,454.8C430.9,459.7 431.3,460.8 434.1,465.4C436.1,468.8 438.5,469.1 439.4,472.4C440.1,474.8 438.6,475.4 437.6,477.7C435.7,481.9 434.6,483.4 432.4,488.2C428.7,496.2 428.1,499.1 423.6,507.6C420.1,514.2 418.8,515.4 414.8,521.6C410.9,527.6 408.3,531.3 406,534.8"/>
<path d="M632.4,432C632.2,434.8 631.9,437.8 631.5,442.5L629.7,467.1L628.8,498.8C629.2,506.9 629.7,508.8 632.4,516.4C635.3,524.7 637.3,525.9 641.1,533.9C644.1,540.2 645.3,541.4 647.3,548C649.7,555.7 649.4,558.7 650.8,565.6C651.6,569.4 652.1,571.8 652.6,574"/>
<polyline points="632.4,432 636.8,435.5 638.5,432"/>
<path d="M642,432C643.2,433.9 644.3,435.9 646.4,439C648.7,442.3 648.5,443.8 651.7,446.1C657.3,450.1 660.2,450.8 667.5,454C673.7,456.7 675.1,457.2 681.6,459.2L707.9,466.3L730.8,468L758.9,472.4L781.7,482.1C789.5,485.0 792.8,484.4 799.3,487.4C803.0,489.1 804.2,491.9 806,493.5"/>
<polyline points="806,536.6 802.8,544.5 802,558.5 799.3,574"/>
<path d="M6,661.3C8.3,661.0 11.0,661.2 14.8,660.1L41.1,651.3L65.8,643.8C70.4,642.8 71.6,643.4 76.3,643.9C81.1,644.4 82.0,646.6 86.8,646.1C91.9,645.6 92.3,642.4 97.4,641.7L129,640.4C136.9,640.2 138.8,638.8 146.6,640.4C155.0,642.2 156.4,644.2 164.2,647.8C169.8,650.4 170.9,651.9 176.5,654C180.3,655.4 181.3,655.3 185.3,655.7C190.0,656.1 191.1,656.3 195.8,655.7C200.5,655.1 203.3,653.8 206,653.1"/>
<path d="M86.8,646.1C88.2,649.4 88.7,653.4 92.1,658.4C95.2,663.0 96.1,664.2 100.9,667.1C106.7,670.6 108.4,670.7 115,672.4C122.7,674.4 124.9,672.6 132.5,675.1C138.6,677.1 138.8,680.0 144.8,682.1C150.1,684.0 152.9,682.6 157.1,683.8C159.1,684.3 158.8,687.2 160.7,686.5C162.6,685.8 162.2,683.2 164.2,681.2C167.9,677.4 170.5,676.9 174.7,672.4C179.3,667.4 180.7,664.6 183.5,660.1C184.6,658.3 184.8,656.9 185.3,655.7"/>
<path d="M130.8,574C129.9,578.7 128.1,583.6 127.3,591.6L126.4,617.9L129,640.8C130.2,646.0 132.5,646.3 134.3,651.3C135.7,655.1 136.5,656.1 136.1,660.1C135.7,664.4 133.5,664.9 132.5,668.9C131.8,671.6 132.5,673.4 132.5,675.1"/>
<path d="M6,616.2C7.4,617.6 9.8,618.5 11.3,621.5C13.4,625.7 13.9,627.1 13.9,632C13.9,637.7 11.1,638.6 11.3,644.3C11.5,651.6 13.9,655.9 14.8,660.1"/>
<path d="M206,602.1C204.2,606.8 203.0,612.1 199.3,619.7C196.0,626.4 193.7,627.0 190.5,633.8C187.3,640.6 186.7,643.8 185.3,649.6C184.7,652.3 185.3,654.1 185.3,655.7"/>
<path d="M206,652.2C210.7,650.6 215.5,648.3 223.6,646.1C231.3,644.0 233.1,643.2 241.1,642.5C247.4,642.0 248.8,643.2 255.2,643.4C264.6,643.6 268.3,644.1 276.3,643.4C280.4,643.0 281.2,642.2 285.1,640.8C290.7,638.7 292.2,638.5 297.4,635.5C301.8,633.0 302.5,632.0 306.2,628.5C308.8,626.0 307.9,623.2 311.4,622.3C315.1,621.4 316.1,624.3 320.2,625C325.7,625.9 327.0,625.1 332.5,625.8C338.9,626.6 340.3,626.9 346.6,628.5C351.4,629.7 352.6,629.9 357.1,632C362.1,634.3 362.4,636.6 367.7,638.1C372.2,639.4 373.7,639.5 378.2,638.1C382.8,636.6 383.1,634.9 387,632C391.1,629.0 391.4,627.4 395.8,625C400.0,622.7 403.3,622.4 406,621.5"/>
<path d="M369.4,574C366.1,576.3 362.8,579.0 357.1,582.8C350.9,586.9 349.7,588.1 343.1,591.6C337.0,594.8 335.5,595.3 329,597.7C322.8,600.0 320.6,599.5 315,602.1C311.4,603.8 309.8,603.9 307.9,607.4C305.3,612.1 305.8,614.1 305.3,619.7C305.0,623.7 306.0,626.2 306.2,628.5"/>
<polyline points="215.7,574 211.3,589.8 206,600.4"/>
<path d="M406,621.5C410.7,620.8 415.7,619.9 423.6,618.8C432.7,617.5 435.8,615.7 443.8,616.2C448.6,616.5 448.8,619.7 453.5,620.6C458.9,621.7 460.4,621.8 465.8,620.6C470.9,619.5 471.2,616.7 476.3,615.7C482.5,614.5 484.1,615.4 490.4,615.7C496.7,616.0 498.1,617.1 504.4,617.1C509.2,617.1 510.2,615.1 515,615.8C520.0,616.5 520.8,618.0 525.5,620C531.9,622.8 533.0,624.3 539.6,626.4C544.9,628.1 546.5,626.9 551.9,628.5C557.7,630.2 558.6,631.6 564.2,633.8C572.0,636.9 574.2,639.0 581.7,640.4C586.4,641.3 587.5,639.0 592.3,639C598.5,639.0 602.3,640.0 606,640.4"/>
<path d="M652.6,574C653.3,576.8 654.1,579.8 655.2,584.5C656.8,591.5 656.4,593.5 658.7,600.4C661.2,607.8 661.8,609.5 665.8,616.2C669.8,623.0 670.9,624.4 676.3,630.2C681.3,635.6 683.2,635.9 688.6,640.8C692.7,644.6 693.8,645.3 697.4,649.6C701.8,654.8 702.5,656.2 706.2,661.9C709.6,667.3 710.4,668.5 713.2,674.2C715.9,679.6 716.6,681.7 718.5,686.5C719.5,689.0 719.7,690.6 720.2,692.1"/>
<path d="M606,639.9C610.7,640.4 615.7,640.7 623.6,641.7C631.5,642.7 633.3,642.9 641.1,644.3C649.1,645.7 650.9,645.8 658.7,647.8C666.7,649.8 668.2,651.3 676.3,653.1C682.5,654.5 684.2,653.3 690.4,654.8C696.9,656.4 697.8,658.9 704.4,660.1C711.4,661.3 713.1,659.7 720.2,660.1C729.0,660.5 730.8,662.3 739.6,661.9C746.9,661.5 748.2,659.7 755.4,658.4C764.0,656.9 767.2,656.9 774.7,655.7C778.7,655.1 781.2,654.5 783.5,654"/>
<path d="M794.9,574C792.8,578.7 789.7,583.4 787,591.6C785.0,597.7 784.6,599.2 784.4,605.6C784.2,615.0 785.9,617.2 786.1,626.7C786.3,634.6 786.9,636.5 785.3,644.3C784.1,650.2 781.9,651.0 780,656.6C778.7,660.4 776.3,662.6 778.2,665.4C780.1,668.2 783.5,665.0 787,667.1C791.7,669.9 792.7,671.2 795.8,675.9C799.1,680.9 798.5,682.8 801.1,688.2C803.1,692.3 804.7,694.7 806,697"/>
<polyline points="783.5,654 789.7,656.6 790.5,665.4 787,667.1"/>
<path d="M719.4,690C720.6,693.3 721.2,697.0 723.8,702.3C727.1,709.0 728.6,710.1 732.5,716.4C736.4,722.7 738.1,723.7 741.3,730.4C744.5,737.2 744.7,738.9 746.6,746.2C748.7,754.0 748.4,755.9 750.1,763.8C751.5,770.2 752.4,771.5 753.6,777.9C754.8,784.0 754.9,787.9 755.4,791.6"/>
</g>
<g fill="none" stroke="#000" stroke-width="1">
<path d="M6,105.3L155,105.3C157.8,105.4 154.9,109.0 156.3,111.4C157.6,113.6 159.7,112.6 160.7,115C161.9,117.9 161.6,119.0 160.7,122C159.9,124.8 159.3,125.5 157.1,127.3C154.4,129.5 153.0,128.8 150.1,130.8C147.4,132.8 146.8,133.4 144.8,136.1C142.1,139.7 141.9,140.9 139.6,144.8C138.8,146.2 138.4,146.9 137.8,148"/>
<polyline points="137.8,148 137.5,149 187,149"/>
<polyline points="202,6 202.8,13 206,16.5"/>
<polyline points="206,18.3 207.8,23.6 206.9,28.8 206,29.7"/>
<polyline points="206,30.6 202,32.4 201.4,36.8 203.7,40.3 206,41.1"/>
<path d="M225.3,57C227.1,54.1 227.8,51.9 230.6,48.2C233.3,44.7 233.7,43.3 237.6,41.1C241.1,39.1 242.4,38.8 246.4,39.4C250.8,40.1 251.2,41.8 255.2,43.8C259.2,45.8 260.2,45.9 264,48.2C267.4,50.3 267.5,51.7 271,53.5C273.2,54.6 273.9,54.6 276.3,54.3C278.9,53.9 279.9,53.9 281.6,52C283.3,50.0 283.7,49.0 283.3,46.4C282.8,42.9 281.4,42.5 279.8,39.4C278.2,36.2 276.7,35.9 276.3,32.4C275.9,29.5 276.6,28.7 278.1,26.2C279.1,24.5 279.7,24.2 281.6,23.6C284.6,22.6 285.5,23.6 288.6,22.7C292.7,21.6 293.3,20.4 297.4,19.2C301.3,18.0 302.4,18.8 306.2,17.4C308.0,16.7 309.1,16.7 309.7,14.8C310.5,12.5 309.9,11.7 308.8,9.5C307.8,7.5 306.5,7.2 305.3,6"/>
<path d="M225.3,57C224.4,57.6 223.9,57.9 222.7,58.7C221.5,59.5 221.5,60.7 220.1,60.5C218.1,60.2 216.8,59.6 216.5,57.8C216.2,56.1 217.6,55.6 219.2,55.2C221.2,54.7 221.7,55.5 223.6,56.1C224.4,56.3 224.8,56.3 225.3,57C226.4,58.4 225.7,59.5 227.1,60.5C229.1,62.0 231.3,60.0 232.4,62.2C233.8,65.1 232.8,66.3 231.5,69.3C230.3,72.1 228.1,71.6 227.1,74.5C226.3,76.8 226.7,77.7 228,79.8C228.9,81.3 231.2,79.8 231.5,81.6C231.8,83.4 230.1,83.6 228.8,85.1C227.3,86.8 225.7,86.4 225.3,88.6C224.8,91.1 228.0,91.5 227.1,93.9C226.0,96.8 224.9,97.8 221.8,98.3C219.2,98.7 218.7,97.1 216.5,95.6C214.7,94.3 214.7,90.6 213,92.1C211.0,93.9 211.8,97.0 210.4,100.9C209.8,102.6 209.6,103.0 208.6,104.4C207.6,105.8 206.9,106.2 206,107.1"/>
<polyline points="209.2,104.4 265.8,105.3 311.4,105.3 309.7,88.6 325.5,90.4 325.9,92.1 406,90.9"/>
<polyline points="406,90.9 606,96.5"/>
<polyline points="606,96.5 635.9,97 787,94.8 806,97.7"/>
<path d="M635.9,96.5C640.6,93.9 643.2,91.3 649.9,88.6C656.0,86.1 657.6,86.6 664,85.1C669.5,83.8 671.6,85.0 676.3,82.4C678.5,81.2 676.8,79.3 678.1,77.2C679.3,75.3 679.6,74.6 681.6,73.7C687.4,71.1 690.4,73.4 695.6,69.3C698.5,67.1 695.1,64.2 697.4,61.4C700.7,57.4 703.9,59.3 707.1,55.2C709.1,52.7 705.4,50.2 707.9,48.2C714.0,43.2 717.6,43.8 725.5,40.3C731.8,37.5 733.7,37.8 739.6,34.1C745.8,30.2 746.4,28.3 751.9,23.6C757.4,18.8 759.8,16.8 764.2,13C764.6,12.6 764.8,12.5 765.1,12.2"/>
<path d="M748.4,6C749.6,7.2 750.1,8.2 751.9,9.5C753.3,10.6 753.7,10.8 755.4,11.3C759.7,12.4 761.3,11.5 765.1,13C766.4,13.5 767.3,14.3 766.8,15.7C766.2,17.5 764.1,16.5 763.3,18.3C762.7,19.8 763.4,20.4 764.2,21.8C766.2,25.2 766.9,25.8 769.4,28.8C770.9,30.6 771.0,31.2 773,32.4C775.9,34.1 777.4,32.9 780,35C781.7,36.3 780.0,38.1 781.7,39.4C784.4,41.5 785.4,42.3 788.8,42C793.9,41.5 794.8,40.1 799.3,37.6C802.6,35.7 803.8,34.1 806,32.4"/>
<path d="M787,94.8C785.8,96.2 784.7,96.9 783.5,99.1C782.3,101.3 781.9,101.9 781.7,104.4C781.5,107.6 783.1,108.3 782.6,111.4C782.3,113.1 780.2,112.4 780,114.1C779.7,116.2 783.5,117.3 781.7,118.5C779.9,119.7 777.7,116.6 774.7,117.6C770.1,119.1 769.2,120.2 765.9,123.8C764.2,125.6 765.1,126.7 764.2,129C762.7,133.0 763.8,134.9 760.7,137.8C758.3,140.0 756.8,139.0 753.6,138.7C749.5,138.3 748.9,136.3 744.8,136.1C740.8,135.9 739.9,136.6 736.1,137.8C732.7,138.9 731.3,138.6 729,141.3C727.0,143.7 727.9,145.8 727.3,148"/>
<polyline points="706.2,148 709.7,144.8 713.2,143.1 715.8,144.8 718.5,148"/>
<polyline points="199.3,97.4 197.6,101.8 201.1,104.4 204.6,100.9 202.8,97.4 199.3,97.4"/>
<path d="M206,107.1C204.1,108.0 201.8,107.3 200.2,109.7C198.0,113.1 200.2,115.0 198.4,118.5C197.6,120.1 195.5,118.6 194.9,120.2C194.1,122.5 197.4,123.7 195.8,125.5C193.8,127.9 190.6,125.0 188.8,127.3C187.3,129.3 189.0,130.6 190.5,132.5C192.3,134.8 195.2,133.3 195.8,136.1C196.4,138.9 193.7,138.9 192.3,141.3C190.6,144.2 190.0,145.8 188.8,148"/>
<path d="M187,148.9C188.5,150.9 192.0,151.8 191.4,155C190.8,158.1 186.2,155.6 185.3,158.5C184.5,161.2 190.1,161.2 188.8,163.8C187.0,167.3 184.3,167.4 180,169.1C176.3,170.6 174.2,168.1 171.2,170.8C168.8,173.0 168.9,175.0 170.3,177.9C171.7,180.8 176.8,178.5 176.5,181.4C176.2,184.3 170.9,183.2 169.4,186.7C168.4,189.1 174.4,190.7 172.1,191.9C169.8,193.1 166.2,188.4 162.4,190.2C159.5,191.6 162.8,194.7 160.7,197.2C158.4,199.9 155.4,198.4 153.6,200.7C152.5,202.1 153.7,203.8 155.4,204.2C157.8,204.8 160.1,200.7 160.7,202.5C161.3,204.3 159.1,206.6 157.1,209.5C155.9,211.3 153.2,210.8 153.6,213C154.2,215.9 157.0,215.5 158.9,218.3C160.3,220.4 162.0,221.4 160.7,223.6C158.9,226.5 156.1,224.6 153.6,227.1C151.1,229.6 152.9,232.0 150.1,234.1C147.6,236.0 145.4,233.5 143.1,235C141.8,235.8 142.5,237.1 143.1,238.5C144.1,240.8 146.2,240.4 146.6,242.9C147.0,245.4 146.7,246.5 144.8,248.2C141.6,251.2 140.5,252.6 136.1,252.6C133.3,252.6 134.2,246.9 131.7,248.2C128.8,249.7 129.5,253.1 127.3,257C125.5,260.3 122.9,260.3 122.9,264C122.9,267.7 124.4,269.8 127.3,271C129.7,271.9 132.3,269.8 131.7,267.5C131.1,265.2 128.4,262.8 125.5,264C122.6,265.2 122.9,267.6 122.9,271C122.9,274.4 125.7,274.7 125.5,278.1C125.3,280.9 122.6,280.5 122,283.3C121.4,286.3 122.6,287.8 122.9,290"/>
<polyline points="143.1,238.5 206,238.5"/>
<polyline points="206,238.5 406,238.2"/>
<polyline points="406,238.5 606,239.4"/>
<polyline points="606,239.4 674.5,238.5"/>
<polyline points="299.1,238 301.8,242.9 307.1,247.3 306.2,262.2 303.5,290"/>
<polyline points="302.7,290 288.6,432"/>
<polyline points="287.7,432 278.9,511.1 282.4,574"/>
<polyline points="282.4,574 284.2,609.1 286,647.8"/>
<polyline points="492.1,239.4 501.8,290"/>
<polyline points="500.9,290 525.5,432"/>
<path d="M525.5,432C526.7,434.3 527.8,435.7 529,439C530.6,443.6 529.8,445.0 531.7,449.6C533.4,453.9 535.0,454.2 536.9,458.4C538.6,462.1 539.6,463.0 539.6,467.1C539.6,470.9 535.4,471.6 536.9,475.1C538.8,479.5 544.8,477.1 545.7,481.2C546.5,485.0 542.5,484.7 539.6,487.4C537.3,489.5 535.6,489.0 534.3,491.8C532.2,496.1 533.1,498.8 532.5,502.3"/>
<polyline points="532.5,539.2 533.4,546.2 531.7,558.5 529.9,574"/>
<polyline points="529.9,574 531.7,581 536.1,586.3 536.9,594.6 540.4,601.2"/>
<polyline points="587.9,239 589.7,218.3 595.8,214.4 597.6,216.2 606,215.1"/>
<path d="M606,215.1C607.2,213.2 608.6,212.3 609.5,209.5C610.7,205.7 608.5,204.2 610.4,200.7C612.7,196.3 614.1,195.6 618.3,192.8C622.6,190.0 623.9,189.8 628.8,188.4C634.2,186.9 635.5,186.5 641.1,186.3C645.1,186.1 646.1,188.6 649.9,187.5C656.9,185.5 657.9,183.5 664,179.6C669.8,176.0 670.2,173.8 676.3,170.8C680.7,168.6 682.5,170.4 686.8,168.2C690.3,166.4 691.0,165.5 693,162.1C694.4,159.7 692.1,158.1 693.9,155.9C696.1,153.2 698.1,154.5 700.9,152.4C702.9,150.9 703.2,149.5 704.4,148"/>
<polyline points="715,148 720.2,152.4 727.3,148"/>
<path d="M674.5,238.5C676.3,237.9 677.4,237.6 679.8,236.8C686.1,234.8 687.6,234.4 693.9,232.4C700.2,230.4 701.6,230.0 707.9,228C712.7,226.4 713.7,226.0 718.5,224.4C723.2,222.8 724.3,222.6 729,220.9C730.6,220.3 730.8,219.0 732.5,219.2C734.5,219.5 734.1,221.6 736.1,221.8C740.8,222.4 741.9,220.8 746.6,220.9L806,223.2"/>
<path d="M674.5,238.5C675.1,240.0 677.0,240.9 676.3,242.9C675.2,246.1 673.6,246.0 671,248.2C668.8,250.0 668.0,249.9 665.8,251.7C664.0,253.1 663.1,253.1 662.2,255.2C660.6,258.9 659.5,260.1 660.5,264C661.3,267.3 663.2,267.1 665.8,269.3C668.0,271.1 668.6,271.3 671,272.8C674.9,275.3 676.3,275.1 679.8,278.1C681.9,279.9 680.7,282.3 683.3,283.3C687.8,285.0 689.6,281.3 693.9,283.3C697.0,284.8 696.2,287.8 697.4,290"/>
<path d="M697.4,290C700.0,293.5 703.0,295.0 705.3,300.5C707.1,304.9 704.2,306.8 706.2,311.1C708.8,316.7 711.5,316.5 715,321.6C717.8,325.7 716.7,327.8 720.2,331.3C724.8,336.0 727.3,335.1 732.5,339.2C736.9,342.7 738.0,343.5 741.3,348C744.4,352.3 743.2,354.5 746.6,358.5C749.7,362.2 751.4,362.0 755.4,364.7C758.5,366.8 759.8,366.5 762.4,369.1C765.0,371.7 766.0,372.5 766.8,376.1C767.7,380.0 764.4,381.2 765.9,384.9C767.5,389.1 769.8,388.7 773,391.9C776.2,395.1 777.3,395.5 780,399C782.8,402.7 781.7,405.0 785.3,407.8C789.2,410.9 792.1,408.0 795.8,411.3C799.0,414.1 798.2,416.0 799.3,420.1C800.6,425.3 800.5,428.0 801.1,432"/>
<polyline points="802.8,432 804.6,439 806,446.1"/>
<polyline points="6,415.7 78.9,415.7"/>
<path d="M122.9,290C120.3,291.2 117.1,290.6 115,293.5C113.6,295.5 118.5,297.6 116.7,298.8C114.9,300.0 112.8,295.9 109.7,297C106.2,298.2 107.3,300.9 104.4,303.2C101.6,305.4 98.6,303.5 97.4,306.7C96.3,309.7 101.5,309.7 100.9,312.8C100.4,315.6 95.6,313.7 95.6,316.4C95.6,319.1 100.4,317.7 100.9,320.8C101.4,323.9 99.9,325.0 97.4,326.9C94.0,329.5 90.4,327.5 88.6,330.4C87.1,332.8 92.6,332.9 92.1,335.7C91.5,339.0 86.8,337.6 86.8,341C86.8,344.3 93.8,343.9 92.1,346.2C90.4,348.5 84.5,345.1 81.6,348C79.3,350.3 85.0,352.2 83.3,355C81.6,357.8 77.5,353.9 76.3,356.8C75.1,359.7 80.3,360.3 79.8,363.8C79.3,367.1 75.4,365.9 74.5,369.1C73.6,372.2 74.2,373.6 76.3,376.1C78.6,378.8 79.8,379.6 83.3,379.6C85.5,379.6 87.4,374.9 86.8,376.1C86.2,377.3 82.4,379.3 81.6,383.1C80.7,387.0 81.3,388.4 83.3,391.9C84.4,393.8 87.7,391.6 87.7,393.7C87.7,396.1 84.3,396.1 83.3,399C82.2,402.0 85.4,403.6 83.3,406C81.2,408.4 77.5,404.6 76.3,406.9C75.1,409.2 78.2,410.3 79.8,413C80.6,414.3 82.2,414.4 81.6,415.7C80.4,418.3 76.9,417.7 76.3,420.9C75.8,423.4 77.3,425.1 79.8,425.3C83.0,425.6 84.2,420.6 86,421.8C87.8,423.0 86.4,425.9 85.1,428.8C84.3,430.8 82.8,430.9 81.6,432"/>
<path d="M79.8,432C79.8,434.3 77.7,436.6 79.8,439C81.9,441.4 86.5,437.5 86.8,439.9C87.1,442.3 82.3,442.5 80.7,446.1C79.7,448.3 79.4,450.5 81.6,451.3C84.8,452.5 88.1,447.8 90.4,449.6C92.7,451.4 90.6,454.1 88.6,456.6C87.0,458.6 84.2,456.1 83.3,458.4C82.1,461.3 82.4,463.6 85.1,465.4C88.4,467.6 91.6,462.8 93.9,465.4C96.2,468.0 90.5,470.0 92.1,473.3C93.6,476.3 96.2,476.5 99.1,475.9C101.2,475.5 101.5,470.6 100.9,471.5C100.3,472.4 99.8,476.0 97.4,478.6C94.9,481.3 92.2,479.8 90.4,483C89.2,485.2 94.4,487.3 92.1,488.2C89.2,489.4 86.2,485.3 81.6,486.5C78.8,487.2 77.6,489.0 78.1,491.8C78.6,494.6 80.5,494.9 83.3,495.3C86.6,495.8 89.2,491.8 90.4,493.5C91.6,495.2 88.6,497.4 86.8,500.5C85.4,503.0 85.5,504.0 83.3,505.8C81.4,507.4 79.9,505.8 78.1,507.6C75.6,510.1 76.5,511.7 74.5,514.6C73.3,516.4 71.5,515.9 71,518.1C70.6,519.8 74.0,520.3 72.8,521.6C71.1,523.4 65.8,521.3 65.8,523.4C65.8,525.5 72.2,526.0 72.8,527.8C73.4,529.6 69.9,528.5 67.5,528.7C65.1,528.9 63.4,526.7 62.2,528.7C60.4,531.6 64.5,534.5 62.2,537.4C60.2,539.9 56.9,536.2 55.2,537.4C53.7,538.4 55.9,539.5 57,541C58.3,542.8 61.3,542.4 60.5,544.5C59.3,547.4 56.3,547.0 53.5,549.8C50.7,552.6 49.4,553.3 48.2,556.8C47.6,558.5 48.2,559.9 49.9,560.3C52.5,560.9 55.5,557.6 56.1,558.5C56.7,559.4 52.1,560.1 51.7,562.9C51.2,566.3 56.7,567.6 54.3,570C51.7,572.6 47.3,570.5 43.8,570.8"/>
<polyline points="45.5,574 44.7,581 48.2,586.3 49.1,591.6 44.7,594.6"/>
<polyline points="44.7,594.6 186.1,594.6"/>
<path d="M186.1,594.6C185.8,596.5 186.3,598.0 185.3,600.4C183.5,604.6 181.6,604.8 180,609.1C178.0,614.4 177.0,615.8 177.4,621.5C177.8,627.3 178.7,628.8 181.7,633.8C184.0,637.7 186.8,636.8 188.8,640.8C191.0,645.1 189.1,646.7 190.5,651.3C191.8,655.5 193.3,656.0 194.9,660.1C196.1,663.1 196.1,664.8 196.7,667.1"/>
<polyline points="344.8,594.6 406,594.6"/>
<polyline points="406,594.6 536.9,594.6"/>
<polyline points="344.8,594.6 341.3,605.6 350.1,616.2 358.9,625 358.9,633.8 355.4,637.3 357.1,644.3"/>
<polyline points="546.6,620 606,622.9"/>
<path d="M606,623.2L744.8,632C747.2,632.2 743.5,634.9 744,637.3C744.4,639.2 746.2,638.9 746.6,640.8C747.1,643.2 744.6,643.9 745.7,646.1C747.3,649.4 748.5,650.1 751.9,651.3C754.5,652.2 756.2,652.5 758,650.4C759.8,648.3 757.6,647.0 758,644.3C758.8,639.5 760.5,638.7 760.7,633.8C760.9,629.8 759.7,629.0 758.9,625C758.1,621.0 756.6,620.2 757.1,616.2C757.4,613.7 758.5,613.1 760.7,611.8C763.5,610.2 764.5,609.6 767.7,610C771.2,610.4 771.4,612.2 774.7,613.5C779.4,615.4 780.5,615.4 785.3,617.1C788.5,618.2 789.2,618.4 792.3,619.7C795.5,621.1 797.0,622.0 799.3,623.2"/>
</g>
<g fill="none" stroke="#ececec" stroke-width="1">
<circle cx="407.5" cy="407.5" r="160"/>
<circle cx="407.5" cy="407.5" r="280"/>
<circle cx="407.5" cy="407.5" r="400"/>
<circle cx="407.5" cy="407.5" r="520"/>
</g>
<circle cx="407.5" cy="407.5" r="40" fill="none" stroke="#ff0000" stroke-width="1"/>
<g class="rl" text-anchor="middle">
<rect x="395.1" y="2.0" width="20.8" height="10" fill="#5c4f4b"/>
<text x="405.5" y="11.0">313</text>
<rect x="395.1" y="122.0" width="20.8" height="10" fill="#5c4f4b"/>
<text x="405.5" y="131.0">219</text>
<rect x="395.1" y="242.0" width="20.8" height="10" fill="#5c4f4b"/>
<text x="405.5" y="251.0">125</text>
<rect x="398.4" y="362.0" width="14.2" height="10" fill="#5c4f4b"/>
<text x="405.5" y="371.0">31</text>
</g>
<g fill="none" stroke-width="1.05" shape-rendering="geometricPrecision">
<circle cx="10.5" cy="151.5" r="4" stroke="#e85008"/>
<path d="M8.0,151.5h5" stroke="#e85008"/>
<path d="M133.0,211.5h7M136.5,208.0v7" stroke="#f46c08"/>
<path d="M201.0,271.5h7M204.5,268.0v7" stroke="#f46c08"/>
<circle cx="626.5" cy="29.5" r="4" stroke="#ffff00"/>
<path d="M624.0,29.5h5" stroke="#ffff00"/>
<path d="M626.5,27.0v5" stroke="#ffff00"/>
<path d="M730.0,25.5h7" stroke="#ff9808"/>
<circle cx="702.5" cy="136.5" r="4" stroke="#ffff00"/>
<path d="M700.0,136.5h5" stroke="#ffff00"/>
<path d="M702.5,134.0v5" stroke="#ffff00"/>
<circle cx="740.5" cy="144.5" r="4" stroke="#ff9808"/>
<path d="M738.0,144.5h5" stroke="#ff9808"/>
<path d="M740.5,142.0v5" stroke="#ff9808"/>
<path d="M720.0,147.5h7" stroke="#ffff00"/>
<path d="M704.0,151.5h7M707.5,148.0v7" stroke="#ffff00"/>
<circle cx="750.5" cy="161.5" r="4" stroke="#00f4ff"/>
<path d="M748.0,161.5h5" stroke="#00f4ff"/>
<path d="M750.5,159.0v5" stroke="#00f4ff"/>
<path d="M668.0,156.5h7" stroke="#ff9808"/>
<circle cx="672.5" cy="164.5" r="4" stroke="#ffbc10"/>
<path d="M670.0,164.5h5" stroke="#ffbc10"/>
<path d="M672.5,162.0v5" stroke="#ffbc10"/>
<path d="M720.0,169.5h7" stroke="#ff9808"/>
<circle cx="723.5" cy="173.5" r="4" stroke="#ffbc10"/>
<path d="M721.0,173.5h5" stroke="#ffbc10"/>
<path d="M723.5,171.0v5" stroke="#ffbc10"/>
<circle cx="736.5" cy="173.5" r="4" stroke="#ffbc10"/>
<path d="M734.0,173.5h5" stroke="#ffbc10"/>
<path d="M736.5,171.0v5" stroke="#ffbc10"/>
<circle cx="748.5" cy="174.5" r="4" stroke="#ff9808"/>
<path d="M746.0,174.5h5" stroke="#ff9808"/>
<path d="M748.5,172.0v5" stroke="#ff9808"/>
<circle cx="743.5" cy="178.5" r="4" stroke="#f46c08"/>
<path d="M741.0,178.5h5" stroke="#f46c08"/>
<path d="M743.5,176.0v5" stroke="#f46c08"/>
<circle cx="751.5" cy="178.5" r="4" stroke="#f46c08"/>
<path d="M749.0,178.5h5" stroke="#f46c08"/>
<circle cx="762.5" cy="172.5" r="4" stroke="#ffff00"/>
<path d="M760.0,172.5h5" stroke="#ffff00"/>
<circle cx="712.5" cy="178.5" r="4" stroke="#ffbc10"/>
<path d="M710.0,178.5h5" stroke="#ffbc10"/>
<path d="M715.0,181.5h7" stroke="#ff9808"/>
<circle cx="722.5" cy="183.5" r="4" stroke="#f46c08"/>
<path d="M720.0,183.5h5" stroke="#f46c08"/>
<path d="M722.5,181.0v5" stroke="#f46c08"/>
<circle cx="733.5" cy="184.5" r="4" stroke="#ffbc10"/>
<path d="M731.0,184.5h5" stroke="#ffbc10"/>
<path d="M733.5,182.0v5" stroke="#ffbc10"/>
<circle cx="726.5" cy="188.5" r="4" stroke="#ffbc10"/>
<path d="M724.0,188.5h5" stroke="#ffbc10"/>
<path d="M726.5,186.0v5" stroke="#ffbc10"/>
<circle cx="762.5" cy="190.5" r="4" stroke="#ffff00"/>
<path d="M760.0,190.5h5" stroke="#ffff00"/>
<path d="M694.0,186.5h7" stroke="#ff9808"/>
<circle cx="704.5" cy="194.5" r="4" stroke="#ffbc10"/>
<path d="M702.0,194.5h5" stroke="#ffbc10"/>
<path d="M704.5,192.0v5" stroke="#ffbc10"/>
<path d="M688.0,199.5h7" stroke="#ff9808"/>
<path d="M693.0,201.5h7" stroke="#ff9808"/>
<path d="M700.0,203.5h7" stroke="#ff9808"/>
<circle cx="712.5" cy="203.5" r="4" stroke="#ff9808"/>
<path d="M710.0,203.5h5" stroke="#ff9808"/>
<circle cx="718.5" cy="201.5" r="4" stroke="#ffbc10"/>
<path d="M716.0,201.5h5" stroke="#ffbc10"/>
<path d="M718.5,199.0v5" stroke="#ffbc10"/>
<path d="M726.0,195.5h7" stroke="#f46c08"/>
<circle cx="729.5" cy="199.5" r="4" stroke="#ffbc10"/>
<path d="M727.0,199.5h5" stroke="#ffbc10"/>
<circle cx="736.5" cy="203.5" r="4" stroke="#ffbc10"/>
<path d="M734.0,203.5h5" stroke="#ffbc10"/>
<path d="M736.5,201.0v5" stroke="#ffbc10"/>
<circle cx="743.5" cy="208.5" r="4" stroke="#ffff00"/>
<path d="M741.0,208.5h5" stroke="#ffff00"/>
<path d="M743.5,206.0v5" stroke="#ffff00"/>
<circle cx="731.5" cy="210.5" r="4" stroke="#ffff00"/>
<path d="M729.0,210.5h5" stroke="#ffff00"/>
<path d="M731.5,208.0v5" stroke="#ffff00"/>
<circle cx="732.5" cy="212.5" r="4" stroke="#ffff00"/>
<path d="M730.0,212.5h5" stroke="#ffff00"/>
<path d="M732.5,210.0v5" stroke="#ffff00"/>
<path d="M750.0,203.5h7" stroke="#ffff00"/>
<circle cx="755.5" cy="214.5" r="4" stroke="#ffff00"/>
<path d="M753.0,214.5h5" stroke="#ffff00"/>
<path d="M755.5,212.0v5" stroke="#ffff00"/>
<circle cx="741.5" cy="221.5" r="4" stroke="#ffff00"/>
<path d="M739.0,221.5h5" stroke="#ffff00"/>
<path d="M741.5,219.0v5" stroke="#ffff00"/>
<path d="M655.0,204.5h7" stroke="#ff9808"/>
<path d="M671.0,201.5h7" stroke="#ffff00"/>
<circle cx="675.5" cy="205.5" r="4" stroke="#ff9808"/>
<path d="M673.0,205.5h5" stroke="#ff9808"/>
<path d="M675.5,203.0v5" stroke="#ff9808"/>
<circle cx="683.5" cy="212.5" r="4" stroke="#ff9808"/>
<path d="M681.0,212.5h5" stroke="#ff9808"/>
<path d="M687.0,220.5h7" stroke="#ffbc10"/>
<path d="M654.0,230.5h7" stroke="#ff9808"/>
<path d="M675.0,230.5h7M678.5,227.0v7" stroke="#ff9808"/>
<path d="M678.0,234.5h7" stroke="#f46c08"/>
<circle cx="673.5" cy="238.5" r="4" stroke="#f46c08"/>
<path d="M671.0,238.5h5" stroke="#f46c08"/>
<path d="M673.5,236.0v5" stroke="#f46c08"/>
<path d="M704.0,227.5h7" stroke="#ff9808"/>
<path d="M727.0,225.5h7" stroke="#ff9808"/>
<path d="M733.0,232.5h7M736.5,229.0v7" stroke="#ffbc10"/>
<circle cx="785.5" cy="256.5" r="4" stroke="#f46c08"/>
<path d="M783.0,256.5h5" stroke="#f46c08"/>
<path d="M785.5,254.0v5" stroke="#f46c08"/>
<path d="M624.0,260.5h7" stroke="#ff9808"/>
<path d="M749.0,341.5h7" stroke="#f46c08"/>
<circle cx="779.5" cy="360.5" r="4" stroke="#f46c08"/>
<path d="M777.0,360.5h5" stroke="#f46c08"/>
<path d="M779.5,358.0v5" stroke="#f46c08"/>
<circle cx="799.5" cy="358.5" r="4" stroke="#f46c08"/>
<path d="M797.0,358.5h5" stroke="#f46c08"/>
<path d="M708.0,384.5h7" stroke="#f46c08"/>
<circle cx="729.5" cy="382.5" r="4" stroke="#f46c08"/>
<path d="M727.0,382.5h5" stroke="#f46c08"/>
<path d="M729.5,380.0v5" stroke="#f46c08"/>
<path d="M768.0,397.5h7" stroke="#f46c08"/>
<circle cx="780.5" cy="404.5" r="4" stroke="#ffff00"/>
<path d="M778.0,404.5h5" stroke="#ffff00"/>
<circle cx="767.5" cy="416.5" r="4" stroke="#f46c08"/>
<path d="M765.0,416.5h5" stroke="#f46c08"/>
<path d="M762.0,427.5h7M765.5,424.0v7" stroke="#ffbc10"/>
<path d="M704.0,526.5h7M707.5,523.0v7" stroke="#ffbc10"/>
<circle cx="716.5" cy="626.5" r="4" stroke="#ffbc10"/>
<path d="M714.0,626.5h5" stroke="#ffbc10"/>
<path d="M716.5,624.0v5" stroke="#ffbc10"/>
<circle cx="721.5" cy="626.5" r="4" stroke="#ff9808"/>
<path d="M719.0,626.5h5" stroke="#ff9808"/>
<path d="M721.5,624.0v5" stroke="#ff9808"/>
<circle cx="721.5" cy="631.5" r="4" stroke="#ff9808"/>
<path d="M719.0,631.5h5" stroke="#ff9808"/>
<path d="M701.0,639.5h7" stroke="#ffbc10"/>
<path d="M703.0,652.5h7" stroke="#ff9808"/>
<circle cx="748.5" cy="650.5" r="4" stroke="#ffff00"/>
<path d="M746.0,650.5h5" stroke="#ffff00"/>
<path d="M748.5,648.0v5" stroke="#ffff00"/>
<circle cx="786.5" cy="630.5" r="4" stroke="#f46c08"/>
<path d="M784.0,630.5h5" stroke="#f46c08"/>
<circle cx="776.5" cy="639.5" r="4" stroke="#f46c08"/>
<path d="M774.0,639.5h5" stroke="#f46c08"/>
<path d="M776.5,637.0v5" stroke="#f46c08"/>
<circle cx="781.5" cy="648.5" r="4" stroke="#f46c08"/>
<path d="M779.0,648.5h5" stroke="#f46c08"/>
<path d="M651.0,646.5h7M654.5,643.0v7" stroke="#ffe000"/>
<circle cx="680.5" cy="667.5" r="4" stroke="#ffff00"/>
<path d="M678.0,667.5h5" stroke="#ffff00"/>
<path d="M680.5,665.0v5" stroke="#ffff00"/>
<path d="M631.0,670.5h7M634.5,667.0v7" stroke="#ffbc10"/>
<path d="M651.0,666.5h7" stroke="#ffbc10"/>
<path d="M653.0,676.5h7M656.5,673.0v7" stroke="#ff9808"/>
<path d="M668.0,673.5h7M671.5,670.0v7" stroke="#ffbc10"/>
<circle cx="685.5" cy="678.5" r="4" stroke="#f46c08"/>
<path d="M683.0,678.5h5" stroke="#f46c08"/>
<path d="M697.0,676.5h7" stroke="#ffbc10"/>
<path d="M644.0,680.5h7" stroke="#ff9808"/>
<circle cx="640.5" cy="684.5" r="4" stroke="#ffe000"/>
<path d="M638.0,684.5h5" stroke="#ffe000"/>
<path d="M637.0,690.5h7M640.5,687.0v7" stroke="#ff9808"/>
<path d="M642.0,694.5h7M645.5,691.0v7" stroke="#ff9808"/>
<circle cx="655.5" cy="691.5" r="4" stroke="#ff9808"/>
<path d="M653.0,691.5h5" stroke="#ff9808"/>
<path d="M665.0,688.5h7" stroke="#ff9808"/>
<circle cx="621.5" cy="690.5" r="4" stroke="#ffff00"/>
<path d="M619.0,690.5h5" stroke="#ffff00"/>
<path d="M621.5,688.0v5" stroke="#ffff00"/>
<circle cx="664.5" cy="698.5" r="4" stroke="#ffbc10"/>
<path d="M662.0,698.5h5" stroke="#ffbc10"/>
<path d="M673.0,699.5h7M676.5,696.0v7" stroke="#ffbc10"/>
<path d="M709.0,680.5h7" stroke="#ffe000"/>
<path d="M709.0,690.5h7" stroke="#ffe000"/>
<circle cx="732.5" cy="679.5" r="4" stroke="#ff9808"/>
<path d="M730.0,679.5h5" stroke="#ff9808"/>
<path d="M732.5,677.0v5" stroke="#ff9808"/>
<circle cx="709.5" cy="700.5" r="4" stroke="#ff9808"/>
<path d="M707.0,700.5h5" stroke="#ff9808"/>
<path d="M762.0,684.5h7" stroke="#ffbc10"/>
<path d="M741.0,701.5h7" stroke="#f46c08"/>
<circle cx="682.5" cy="705.5" r="4" stroke="#ffbc10"/>
<path d="M680.0,705.5h5" stroke="#ffbc10"/>
<circle cx="692.5" cy="704.5" r="4" stroke="#ffbc10"/>
<path d="M690.0,704.5h5" stroke="#ffbc10"/>
<path d="M692.5,702.0v5" stroke="#ffbc10"/>
<circle cx="678.5" cy="711.5" r="4" stroke="#ffbc10"/>
<path d="M676.0,711.5h5" stroke="#ffbc10"/>
<circle cx="683.5" cy="716.5" r="4" stroke="#ffe000"/>
<path d="M681.0,716.5h5" stroke="#ffe000"/>
<circle cx="696.5" cy="714.5" r="4" stroke="#ff9808"/>
<path d="M694.0,714.5h5" stroke="#ff9808"/>
<path d="M696.5,712.0v5" stroke="#ff9808"/>
<circle cx="652.5" cy="708.5" r="4" stroke="#ffe000"/>
<path d="M650.0,708.5h5" stroke="#ffe000"/>
<path d="M652.5,706.0v5" stroke="#ffe000"/>
<circle cx="643.5" cy="709.5" r="4" stroke="#ff9808"/>
<path d="M641.0,709.5h5" stroke="#ff9808"/>
<path d="M643.5,707.0v5" stroke="#ff9808"/>
<circle cx="647.5" cy="711.5" r="4" stroke="#ffbc10"/>
<path d="M645.0,711.5h5" stroke="#ffbc10"/>
<path d="M647.5,709.0v5" stroke="#ffbc10"/>
<path d="M655.0,710.5h7M658.5,707.0v7" stroke="#ff9808"/>
<circle cx="636.5" cy="715.5" r="4" stroke="#ffff00"/>
<path d="M634.0,715.5h5" stroke="#ffff00"/>
<path d="M636.5,713.0v5" stroke="#ffff00"/>
<path d="M624.0,714.5h7M627.5,711.0v7" stroke="#ffbc10"/>
<path d="M630.0,718.5h7" stroke="#ffff00"/>
<circle cx="611.5" cy="720.5" r="4" stroke="#ffff00"/>
<path d="M609.0,720.5h5" stroke="#ffff00"/>
<path d="M611.5,718.0v5" stroke="#ffff00"/>
<path d="M613.0,725.5h7M616.5,722.0v7" stroke="#00f4ff"/>
<circle cx="650.5" cy="718.5" r="4" stroke="#ffe000"/>
<path d="M648.0,718.5h5" stroke="#ffe000"/>
<path d="M650.5,716.0v5" stroke="#ffe000"/>
<circle cx="634.5" cy="726.5" r="4" stroke="#ffbc10"/>
<path d="M632.0,726.5h5" stroke="#ffbc10"/>
<path d="M634.5,724.0v5" stroke="#ffbc10"/>
<circle cx="650.5" cy="728.5" r="4" stroke="#ffbc10"/>
<path d="M648.0,728.5h5" stroke="#ffbc10"/>
<path d="M650.5,726.0v5" stroke="#ffbc10"/>
<path d="M745.0,712.5h7" stroke="#ffbc10"/>
<path d="M712.0,724.5h7M715.5,721.0v7" stroke="#ffbc10"/>
<path d="M725.0,733.5h7M728.5,730.0v7" stroke="#ff9808"/>
<circle cx="682.5" cy="729.5" r="4" stroke="#ffbc10"/>
<path d="M680.0,729.5h5" stroke="#ffbc10"/>
<path d="M682.5,727.0v5" stroke="#ffbc10"/>
<path d="M693.0,735.5h7" stroke="#ffe000"/>
<circle cx="704.5" cy="737.5" r="4" stroke="#ff9808"/>
<path d="M702.0,737.5h5" stroke="#ff9808"/>
<path d="M704.5,735.0v5" stroke="#ff9808"/>
<circle cx="697.5" cy="741.5" r="4" stroke="#ffe000"/>
<path d="M695.0,741.5h5" stroke="#ffe000"/>
<path d="M668.0,738.5h7" stroke="#ffbc10"/>
<path d="M671.0,740.5h7" stroke="#ff9808"/>
<path d="M656.0,742.5h7" stroke="#ffe000"/>
<circle cx="665.5" cy="746.5" r="4" stroke="#ffe000"/>
<path d="M663.0,746.5h5" stroke="#ffe000"/>
<circle cx="682.5" cy="758.5" r="4" stroke="#f46c08"/>
<path d="M680.0,758.5h5" stroke="#f46c08"/>
<circle cx="695.5" cy="763.5" r="4" stroke="#ff9808"/>
<path d="M693.0,763.5h5" stroke="#ff9808"/>
<circle cx="696.5" cy="754.5" r="4" stroke="#ffff00"/>
<path d="M694.0,754.5h5" stroke="#ffff00"/>
<circle cx="697.5" cy="758.5" r="4" stroke="#ffff00"/>
<path d="M695.0,758.5h5" stroke="#ffff00"/>
<path d="M697.5,756.0v5" stroke="#ffff00"/>
<circle cx="696.5" cy="760.5" r="4" stroke="#ffff00"/>
<path d="M694.0,760.5h5" stroke="#ffff00"/>
<circle cx="664.5" cy="764.5" r="4" stroke="#ff9808"/>
<path d="M662.0,764.5h5" stroke="#ff9808"/>
<path d="M664.5,762.0v5" stroke="#ff9808"/>
<circle cx="643.5" cy="774.5" r="4" stroke="#ffbc10"/>
<path d="M641.0,774.5h5" stroke="#ffbc10"/>
<path d="M666.0,772.5h7" stroke="#ffff00"/>
<path d="M666.0,775.5h7" stroke="#ffff00"/>
<path d="M645.0,782.5h7" stroke="#ffbc10"/>
<path d="M651.0,782.5h7M654.5,779.0v7" stroke="#ffe000"/>
<path d="M603.0,744.5h7" stroke="#f46c08"/>
<path d="M585.0,735.5h7" stroke="#ffff00"/>
<circle cx="602.5" cy="744.5" r="4" stroke="#f46c08"/>
<path d="M600.0,744.5h5" stroke="#f46c08"/>
</g>
</svg>
<svg class="pn" width="1138" height="812" viewBox="0 0 1138 812">
<rect x="812.5" y="8.5" width="319" height="318.0" rx="6" ry="6" fill="#000" stroke="#c4c4c4" stroke-width="1"/>
<rect x="812.5" y="333.5" width="319" height="113.0" rx="6" ry="6" fill="#000" stroke="#c4c4c4" stroke-width="1"/>
<rect x="812.5" y="453.5" width="319" height="349.0" rx="6" ry="6" fill="#000" stroke="#c4c4c4" stroke-width="1"/>
<g shape-rendering="crispEdges">
<rect x="819.5" y="16.5" width="57" height="17" fill="#4a0000" stroke="#c8c8c8"/>
<rect x="883.5" y="16.5" width="57" height="17" fill="#303030" stroke="#c8c8c8"/>
<rect x="994.5" y="16.5" width="127" height="17" fill="#2b2b2b" stroke="#c8c8c8"/>
<rect x="821.5" y="64.5" width="81" height="15" fill="#555" stroke="#b4b4b4"/>
<rect x="931.5" y="64.5" width="81" height="15" fill="#555" stroke="#b4b4b4"/>
<rect x="1041.5" y="64.5" width="81" height="15" fill="#555" stroke="#b4b4b4"/>
</g>
<text class="bt m" x="848.3" y="30" style="fill:#f2c6c6">STRIKE</text>
<text class="bt m" x="912.2" y="30" style="fill:#b4bcc4;letter-spacing:.35px">NOISE</text>
<text class="bt" x="998" y="30">Bng 75°</text>
<text class="bt e" x="1118" y="30" style="fill:#00e000">392mi</text>
<text class="lb m" x="862.2" y="76">Strikes/min</text>
<text class="lb m" x="972" y="76">Close/min</text>
<text class="lb m" x="1081.5" y="76">Noises/min</text>
<text class="big e" x="903.5" y="112">5</text>
<text class="big e" x="1013" y="112">0</text>
<text class="big e" x="1122" y="112" style="fill:#c0c0c0">1</text>
<text class="e" x="903" y="143">Total Strikes</text>
<text class="e" x="1013" y="143">Total Close</text>
<text class="e g" x="1123.3" y="143">Total Noises</text>
<text class="e" x="903" y="161.2">7723</text>
<text class="e" x="1013" y="161.2">33</text>
<text class="e g" x="1123.3" y="161.2">790</text>
<text class="g" x="820.5" y="215" style="letter-spacing:-0.02px">Lightning type distribution</text>
<rect x="821" y="217" width="302.5" height="1" fill="#a8a8a8" shape-rendering="crispEdges"/>
<text class="b" x="821" y="236.6">Cloud-ground</text>
<text class="b" x="913" y="236.6" style="font-weight:normal;font-size:12px">+</text>
<text class="b" x="1015.5" y="236.6">−</text>
<g shape-rendering="crispEdges">
<rect x="925.5" y="227.5" width="50" height="10" rx="1.5" fill="#000" stroke="#9c9c9c"/>
<rect x="926" y="228" width="10" height="9" fill="#f00"/>
<rect x="1028.5" y="227.5" width="50" height="10" rx="1.5" fill="#000" stroke="#9c9c9c"/>
<rect x="1029" y="228" width="25" height="9" fill="#98ccff"/>
</g>
<text class="b" x="979" y="236.6" style="letter-spacing:.9px">21%</text>
<text class="b" x="1082" y="236.6" style="letter-spacing:.9px">51%</text>
<text class="b g" x="821" y="260.7" style="fill:#d0d0d0">Count</text>
<text class="b" x="925.5" y="260.7">1604</text>
<text class="b" x="1028.5" y="260.7">3954</text>
<text class="b" x="821" y="290.4">Intracloud</text>
<text class="b" x="913" y="290.4" style="font-weight:normal;font-size:12px">+</text>
<text class="b" x="1015.5" y="290.4">−</text>
<g shape-rendering="crispEdges">
<rect x="925.5" y="281.5" width="50" height="10" rx="1.5" fill="#000" stroke="#9c9c9c"/>
<rect x="926" y="282" width="7" height="9" fill="#f062aa"/>
<rect x="1028.5" y="281.5" width="50" height="10" rx="1.5" fill="#000" stroke="#9c9c9c"/>
<rect x="1029" y="282" width="7" height="9" fill="#00e800"/>
</g>
<text class="b" x="979" y="290.4" style="letter-spacing:.9px">14%</text>
<text class="b" x="1082" y="290.4" style="letter-spacing:.9px">14%</text>
<text class="b g" x="821" y="314.5" style="fill:#d0d0d0">Count</text>
<text class="b" x="925.5" y="314.5">1102</text>
<text class="b" x="1028.5" y="314.5">1063</text>
<text class="dt" x="821" y="352.4">10/27/2025 7:49:20 PM</text>
<rect x="821" y="358" width="302.5" height="1" fill="#a8a8a8" shape-rendering="crispEdges"/>
<text x="821" y="387.8">Squelch</text><text x="909" y="387.8">0</text><text x="981" y="387.8">Upload</text><text class="g" x="1061" y="387.8">Disabled</text>
<text x="821" y="407.8">Persistence</text><text x="909" y="407.8">90 min</text><text x="981" y="407.8">Capture</text><text class="gr" x="1061" y="407.8">Active</text>
<text x="821" y="427.9">Range</text><text x="909" y="427.9">313 mi</text><text x="981" y="427.9">Receiver</text><text class="gr" x="1061" y="427.9">Enabled</text>
<text class="g" x="821" y="474.6">Uptime</text><text x="909" y="474.6">255:20</text><text class="g" x="981" y="474.6">Peak time</text><text class="g" x="1061" y="474.6">Plot</text>
<text class="g" x="821" y="497.5">Peak rate</text><text x="909" y="497.5">34/min</text><text x="981" y="497.5">3:51 AM</text><text x="1061" y="497.5">Strike</text>
<text class="g" x="822" y="527.6">Trend graph</text><text x="908.5" y="527.6">60 min</text>
<g shape-rendering="crispEdges" fill="#c8c8c8">
<rect x="1088" y="542" width="1" height="236"/>
<rect x="822" y="777" width="267" height="1"/>
<rect x="1086" y="738" width="4" height="1"/>
<rect x="1084" y="699" width="5" height="1"/>
<rect x="1086" y="659" width="4" height="1"/>
<rect x="1084" y="620" width="5" height="1"/>
<rect x="1086" y="581" width="4" height="1"/>
<rect x="1084" y="541" width="5" height="1"/>
<rect x="823" y="777" width="1" height="3"/>
<rect x="867" y="777" width="1" height="3"/>
<rect x="911" y="777" width="1" height="3"/>
<rect x="956" y="777" width="1" height="3"/>
<rect x="1000" y="777" width="1" height="3"/>
<rect x="1044" y="777" width="1" height="3"/>
<rect x="1089" y="777" width="1" height="3"/>
</g>
<text class="ax" x="1092" y="703.3">10</text>
<text class="ax" x="1092" y="624.6">20</text>
<text class="ax" x="1092" y="545.9">30</text>
<text class="ax" x="820.6" y="792.6">60</text>
<text class="ax" x="864.9" y="792.6">50</text>
<text class="ax" x="909.3" y="792.6">40</text>
<text class="ax" x="953.6" y="792.6">30</text>
<text class="ax" x="997.9" y="792.6">20</text>
<text class="ax" x="1042.2" y="792.6">10</text>
<text class="ax" x="1086.6" y="792.6">0</text>
<text class="ax" x="1100.3" y="792.6">min</text>
<g fill="none" stroke-width="1" stroke-linejoin="miter" shape-rendering="crispEdges">
<path d="M822.6,762.0 823.7,769.0 824.4,769.7M850.5,777.4 852.6,769.7 855.4,769.7 856.8,777.4M913.0,777.4 914.5,769.7 916.6,769.7 918.0,777.4M929.9,777.4 930.6,769.7 933.4,769.7 934.8,777.4 936.3,771.8M965.8,761.7 967.9,769.7 970.7,777.4 972.1,769.7 974.9,777.4M966.0,766.2 968.8,769.7 971.6,777.4M973.0,769.7 977.3,777.4M1020.1,777.4 1022.3,769.7 1026.5,777.4M1033.5,769.7 1036.3,769.7 1039.1,777.4M1084.1,762.0 1087.0,756.3 1087.7,760.6" stroke="#98ccff"/>
<path d="M835.7,769.7 838.5,777.4M861.0,770.4 862.4,777.4M871.6,777.4 873.7,769.7 880.7,769.7 882.1,777.4M891.2,777.4 891.9,769.7 893.4,761.7 896.9,754.2 896.2,759.2M901.8,777.4 902.5,776.0 904.6,769.7 905.3,777.4M933.4,777.4 935.5,769.7 937.0,776.0 939.1,769.7 939.8,777.4M1004.0,777.4 1005.4,769.7 1008.2,769.7 1009.6,777.4M1071.5,777.4 1072.2,769.7 1072.9,777.4M1080.6,777.4 1081.3,769.7 1082.7,777.4M1087.0,771.8 1088.4,777.4" stroke="#f062aa"/>
<path d="M823.7,777.4 824.4,770.4 825.8,776.0M829.4,777.4 830.1,769.7 832.2,761.7 834.3,766.2 836.4,776.0 837.1,777.4M882.8,777.4 884.9,769.7 889.1,769.7 889.8,777.4M892.7,777.4 893.4,769.7 896.9,769.7 897.6,777.4M901.8,777.4 902.5,769.7 903.9,762.0 905.6,754.2 906.3,769.7 907.1,777.4M914.5,776.0 917.3,773.2M952.4,769.7 953.1,766.2 955.2,761.7 955.9,766.2M963.7,777.4 965.1,769.7 967.2,761.7 969.3,762.0 970.7,769.7 972.1,777.4M967.4,761.7 970.2,762.0 971.6,769.7 972.3,777.4M1022.3,769.7 1023.7,777.4 1025.1,769.7 1030.7,769.7M1034.2,777.4 1034.9,769.7 1036.3,761.7 1039.1,753.5 1041.2,754.2 1041.9,759.2M1072.2,777.4 1073.6,769.7 1076.4,761.7 1079.2,762.0 1080.6,769.7 1082.0,777.4M1084.8,777.4 1086.3,766.2 1087.7,762.0 1088.4,777.4" stroke="#ff0000"/>
<path d="M822.6,769.7 825.8,769.7 826.5,777.4M828.9,777.4 830.1,769.7 831.5,761.7 834.3,761.7 835.7,769.7 838.5,769.7 839.9,777.4M851.2,777.4 851.9,769.7 852.8,766.2 854.7,754.2 856.1,754.2 856.5,761.7M861.3,769.7 862.4,777.4M871.6,777.4 872.3,769.7 875.1,769.7 876.5,776.0M883.5,777.4 884.6,769.7 887.7,762.0 891.9,761.7 892.7,769.7 894.8,777.4M899.7,777.4 900.4,769.7 906.0,769.7 906.7,777.4M910.9,777.4 911.6,769.7 914.5,769.7 916.6,776.0 918.7,769.7 922.9,769.7 924.3,777.4M929.9,777.4 930.6,769.7 937.0,769.7 937.7,777.4M948.9,777.4 949.6,769.7 954.5,769.7 955.2,777.4M962.3,777.4 963.0,769.7 967.2,769.7 968.6,777.4M973.5,769.7 974.9,762.0 976.1,761.7M966.0,762.0 967.4,769.7 968.8,777.4M973.0,777.4 973.7,769.7 975.1,762.0 977.3,761.7 978.0,769.7 979.4,777.4M990.6,777.4 992.0,769.7 995.5,769.7 996.2,777.4M1019.4,777.4 1020.1,769.7 1020.9,761.7 1025.1,761.7 1026.5,766.2 1027.9,761.7 1030.0,769.7 1031.4,777.4M1033.5,777.4 1034.9,769.7 1041.9,769.7 1042.7,777.4M1070.1,777.4 1071.5,769.7 1074.3,769.7 1075.7,777.4 1077.1,769.7 1078.5,777.4 1080.6,769.7 1083.4,769.7 1084.1,777.4" stroke="#00e800"/>
<rect x="822" y="777" width="267" height="1" fill="#e0e0e0" stroke="none"/>
<polyline points="822.6,723.0 822.6,764.8 824.2,762.7 825.6,761.7 826.5,769.3 828.9,769.3 830.1,762.0 832.6,746.5 835.0,754.2 837.1,761.7 838.5,761.7 840.2,766.2 841.6,777.4 846.0,777.4 848.1,769.7 851.2,769.7 852.8,754.2 854.7,739.5 855.7,738.1 856.8,754.2 858.2,761.7 859.9,762.0 861.7,769.3 867.3,769.7 868.7,777.4 870.9,777.4 872.3,766.2 873.9,761.7 876.5,766.2 877.6,761.7 880.4,761.7 882.1,777.4 883.5,769.7 884.6,764.8 887.7,754.2 891.2,753.5 892.7,746.5 894.8,752.1 896.2,746.5 897.6,754.2 899.0,762.0 900.4,766.2 902.1,754.2 904.3,746.5 905.6,738.1 906.7,747.9 908.1,757.1 910.2,766.2 911.6,769.7 913.0,762.0 921.5,762.0 923.6,769.7 925.7,777.4 928.5,777.4 930.2,769.7 931.0,762.0 933.4,761.7 934.1,753.5 938.4,753.5 939.8,762.0 941.2,769.7 942.6,777.4 945.4,777.4 947.5,769.7 951.7,769.0 953.1,761.7 954.5,753.5 955.9,759.2 957.4,769.7 959.5,777.4 961.6,777.4 963.0,762.0 965.1,746.5 966.0,738.1 967.4,743.7 970.2,759.2 971.6,762.0 973.7,754.2 975.6,746.5 977.3,754.2 979.4,769.7 980.8,762.0 983.6,761.7 985.0,769.7 987.1,777.4 989.9,777.4 992.0,762.0 995.5,761.7 996.9,777.4 999.8,777.4 1001.9,769.7 1004.7,769.3 1007.5,761.7 1008.9,762.0 1011.0,769.7 1012.4,773.2 1014.5,769.3 1016.6,769.7 1018.0,777.4 1020.1,757.8 1022.7,746.5 1025.1,757.8 1027.9,753.5 1030.0,759.2 1031.4,777.4 1032.8,769.7 1034.9,761.7 1037.7,746.5 1040.5,746.5 1042.7,757.8 1044.1,777.4 1045.5,774.6 1047.6,769.0 1049.7,753.5 1050.4,759.2 1052.5,761.7 1054.6,762.0 1057.4,771.8 1059.5,777.4 1061.6,777.4 1063.7,769.7 1066.6,769.3 1068.0,774.6 1070.1,769.7 1072.9,762.0 1076.4,746.5 1078.5,746.5 1080.6,757.8 1082.0,766.2 1084.1,761.7 1085.5,746.5 1087.7,745.8 1088.6,738.1" stroke="#fff" stroke-width="1"/>
</g>
<rect x="9.5" y="759.5" width="243" height="43" fill="#000" stroke="#909090" shape-rendering="crispEdges"/>
<text class="lg" x="13.5" y="771.2">Symbols</text><text class="lg" x="53" y="771.2">-CG</text><text class="lg" x="78.5" y="771.2">-IC</text><text class="lg" x="99.2" y="771.2">+CG</text><text class="lg" x="124" y="771.2">+IC</text><text class="lg" x="153" y="771.2">Strike age color codes</text>
<text class="lg" x="13.5" y="783.8">Recent</text><text class="lg" x="13.5" y="796.5">Old</text>
<g fill="none" stroke="#00e8ff" stroke-width="1.2"><circle cx="60.5" cy="780.5" r="3.8"/><path d="M58,780.5h5M82,780.5h7M110.5,778.0v5M108,780.5h5M132,780.5h7M135.5,777.0v7"/><circle cx="110.5" cy="780.5" r="3.8"/></g>
<g fill="none" stroke="#ffff00" stroke-width="1.2"><circle cx="60.5" cy="793.5" r="3.8"/><path d="M58,793.5h5M82,793.5h7M110.5,791.0v5M108,793.5h5M132,793.5h7M135.5,790.0v7"/><circle cx="110.5" cy="793.5" r="3.8"/></g>
<text class="lg" x="153.3" y="783.8" style="fill:#ffd800">15+</text>
<text class="lg" x="188" y="783.8" style="fill:#f4a400">30+</text>
<text class="lg" x="223.2" y="783.8" style="fill:#f09400">45+</text>
<text class="lg" x="153.3" y="796.5" style="fill:#e87c00">60+</text>
<text class="lg" x="188" y="796.5" style="fill:#e86400">75+</text>
<text class="lg" x="223.2" y="796.5" style="fill:#e83c00">90+</text>
<rect x="685" y="792" width="121" height="14" fill="#000"/>
<text class="lg" x="688.3" y="802.2" style="font-size:9.7px;letter-spacing:-0.22px">©2005 Astrogenic Systems</text>
</svg>
</body></html>
